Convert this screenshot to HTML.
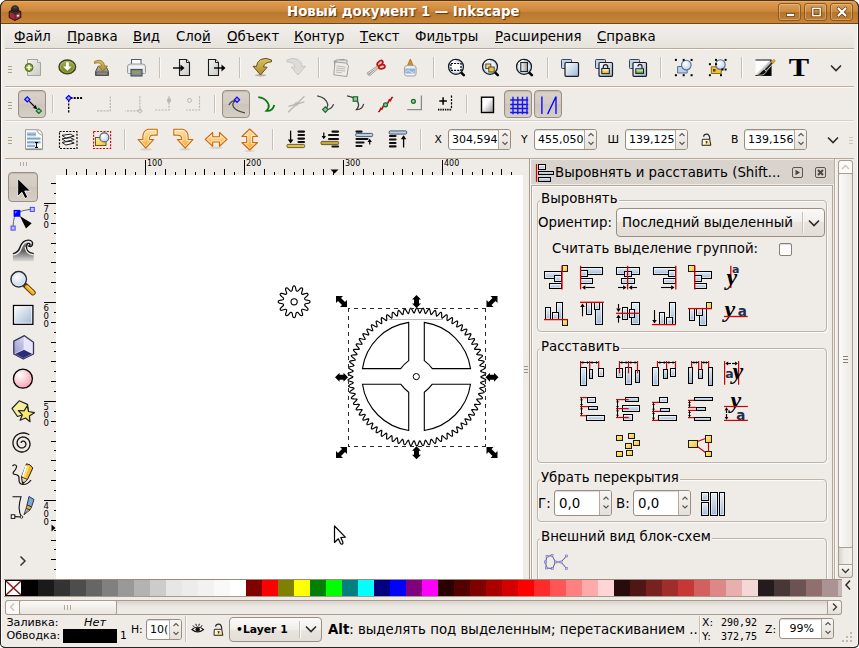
<!DOCTYPE html><html lang="ru"><head><meta charset="utf-8"><title>Новый документ 1 — Inkscape</title><style>
html,body{margin:0;padding:0;background:#fff;}
body{width:859px;height:648px;overflow:hidden;position:relative;font-family:"DejaVu Sans","Liberation Sans",sans-serif;font-size:13.33px;color:#000;}
#win{position:absolute;left:0;top:0;width:859px;height:648px;overflow:hidden;}
#win div,#win svg{position:absolute;box-sizing:border-box;}
svg.ic{overflow:visible;}
.t{white-space:pre;line-height:16px;height:16px;}
.s{white-space:pre;line-height:13px;height:13px;font-size:10.800px;}
.r{white-space:pre;font-size:8px;line-height:9px;height:9px;color:#000;}
u{text-decoration:underline;text-underline-offset:1px;}
.sep{background:#c9bfb3;width:1px;box-shadow:1px 0 0 #fbf9f7;}
.hline{height:1px;background:#c4b5a6;}
.btnp{border:1px solid #9a8e80;border-radius:4px;background:linear-gradient(#d9d2ca,#d3cbc2 50%,#cdc5bb 50%,#d6cfc7);box-shadow:inset 0 1px 1px rgba(0,0,0,.12);}
.spin{border:1px solid #9a8e80;border-radius:3px;background:#fff;box-shadow:inset 0 1px 1px rgba(0,0,0,.15);}
.spinb{border-left:1px solid #b5aa9c;background:linear-gradient(#f8f6f4,#e4dfd9);border-radius:0 2px 2px 0;}
.frame{border:1px solid #c0b4a6;border-radius:4px;box-shadow:inset 1px 1px 0 #fbfaf8, 1px 1px 0 #fbfaf8;}
.flabel{background:#efebe7;padding:0 1px;white-space:pre;line-height:16px;height:16px;}
</style></head><body><div id="win">
<svg class="ic" width="0" height="0" style="left:0;top:0"><defs>
<linearGradient id="gpaper" x1="0" y1="0" x2="1" y2="1"><stop offset="0" stop-color="#f4f4f2"/><stop offset="1" stop-color="#c9c9c5"/></linearGradient>
<linearGradient id="gblue" x1="0" y1="0" x2="1" y2="1"><stop offset="0" stop-color="#dbe6f2"/><stop offset="1" stop-color="#a9c0da"/></linearGradient>
<linearGradient id="gblue2" x1="0" y1="0" x2="0" y2="1"><stop offset="0" stop-color="#e4edf6"/><stop offset="1" stop-color="#9db8d6"/></linearGradient>
<linearGradient id="ggreen" x1="0" y1="0" x2="0" y2="1"><stop offset="0" stop-color="#a3b052"/><stop offset="1" stop-color="#6f7f22"/></linearGradient>
<linearGradient id="ggold" x1="0" y1="0" x2="0" y2="1"><stop offset="0" stop-color="#d9c26a"/><stop offset="1" stop-color="#a98a2e"/></linearGradient>
<linearGradient id="gorange" x1="0" y1="0" x2="0" y2="1"><stop offset="0" stop-color="#fde3a8"/><stop offset="1" stop-color="#f5a93a"/></linearGradient>
<linearGradient id="ggray" x1="0" y1="0" x2="0" y2="1"><stop offset="0" stop-color="#b9b9b5"/><stop offset="1" stop-color="#6e6e6a"/></linearGradient>
<linearGradient id="gwg" x1="0" y1="0" x2="1" y2="0"><stop offset="0" stop-color="#ffffff"/><stop offset="1" stop-color="#9a9a9a"/></linearGradient>
<linearGradient id="gyel" x1="0" y1="0" x2="1" y2="1"><stop offset="0" stop-color="#fff0a0"/><stop offset="1" stop-color="#f2c230"/></linearGradient>
<radialGradient id="gpink" cx=".35" cy=".3" r=".8"><stop offset="0" stop-color="#ffffff"/><stop offset="1" stop-color="#f79aa8"/></radialGradient>
<radialGradient id="glens" cx=".4" cy=".35" r=".7"><stop offset="0" stop-color="#ffffff"/><stop offset="1" stop-color="#bcd0e6"/></radialGradient>
</defs></svg>
<div style="left:0px;top:0px;width:859px;height:648px;background:#efebe7;border-radius:7px 7px 5px 5px;border:1px solid #2a2522;"></div>
<div style="left:1px;top:0px;width:857px;height:24px;border-radius:6px 6px 0 0;border-top:1px solid #4a3520;border-bottom:1px solid #6a4820;background:linear-gradient(#f0b878 0px,#e09a4c 1px,#cb863b 10.500px,#b87830 11px,#ba7a31 13px,#c98435 21px);"></div>
<div class="t" style="left:287px;top:4px;font-weight:bold;color:#fff;text-shadow:1px 1px 1px rgba(60,30,0,.8);letter-spacing:0px;">Новый документ 1 — Inkscape</div>
<svg class="ic" style="left:7.0px;top:4.5px;" width="16" height="16" viewBox="0 0 16 16"><path d="M2.200 6.500 L8 4.500 L13.800 6.500 V12.500 L8 15.500 L2.200 12.500Z" fill="#a8283a" stroke="#1c1418" stroke-width="1"/><path d="M8 9 V15.500" stroke="#5a1420" stroke-width=".8"/><path d="M2.200 6.500 L8 9 L13.800 6.500 L8 4.500Z" fill="#3a3634" stroke="#1c1418" stroke-width=".6"/><path d="M4.400 5.600 Q4 .8 8 .8 Q12 .8 11.600 5.600 Q8 7.500 4.400 5.600Z" fill="#2c2a28" stroke="#141210" stroke-width=".8"/><ellipse cx="8" cy="2.600" rx="2.300" ry="1" fill="#4a4844"/><ellipse cx="11" cy="10.700" rx="1.800" ry="1.300" transform="rotate(-20 11 10.700)" fill="#e8e0d0" stroke="#333" stroke-width=".5"/></svg>
<div style="left:778px;top:3px;width:23px;height:18px;border:1px solid #8a5a22;border-radius:3px;background:linear-gradient(#dba05a,#c98a40 50%,#b5742c 50%,#c07f33);box-shadow:inset 0 0 0 1px rgba(255,220,170,.35);"></div>
<svg class="ic" style="left:781.5px;top:4.0px;" width="16" height="16" viewBox="0 0 16 16"><rect x="4.500" y="9.500" width="8" height="3" fill="#fff" stroke="#6b3f10" stroke-width=".8"/></svg>
<div style="left:804px;top:3px;width:23px;height:18px;border:1px solid #8a5a22;border-radius:3px;background:linear-gradient(#dba05a,#c98a40 50%,#b5742c 50%,#c07f33);box-shadow:inset 0 0 0 1px rgba(255,220,170,.35);"></div>
<svg class="ic" style="left:807.5px;top:4.0px;" width="16" height="16" viewBox="0 0 16 16"><rect x="4.800" y="4.300" width="7.400" height="7.400" fill="none" stroke="#6b3f10" stroke-width="2.800"/><rect x="4.800" y="4.300" width="7.400" height="7.400" fill="none" stroke="#fff" stroke-width="1.400"/></svg>
<div style="left:830px;top:3px;width:23px;height:18px;border:1px solid #8a5a22;border-radius:3px;background:linear-gradient(#dba05a,#c98a40 50%,#b5742c 50%,#c07f33);box-shadow:inset 0 0 0 1px rgba(255,220,170,.35);"></div>
<svg class="ic" style="left:833.5px;top:4.0px;" width="16" height="16" viewBox="0 0 16 16"><path d="M4.500 4.500 L11.500 11.500 M11.500 4.500 L4.500 11.500" stroke="#6b3f10" stroke-width="3.600" stroke-linecap="round"/><path d="M4.500 4.500 L11.500 11.500 M11.500 4.500 L4.500 11.500" stroke="#fff" stroke-width="2.200" stroke-linecap="round"/></svg>
<div style="left:1px;top:24px;width:1px;height:623px;background:#fdfcfb;"></div>
<div style="left:857px;top:24px;width:1px;height:623px;background:#fdfcfb;"></div>
<div style="left:5px;top:24px;width:849px;height:25px;background:linear-gradient(#f3f0ec,#e6e2dc);border-bottom:1px solid #b9a999;"></div>
<div style="left:5px;top:49px;width:849px;height:1px;background:#fbfaf9;"></div>
<div class="t" style="left:14px;top:29px;"><u>Ф</u>айл</div>
<div class="t" style="left:67px;top:29px;"><u>П</u>равка</div>
<div class="t" style="left:133px;top:29px;"><u>В</u>ид</div>
<div class="t" style="left:176px;top:29px;">Сло<u>й</u></div>
<div class="t" style="left:227px;top:29px;"><u>О</u>бъект</div>
<div class="t" style="left:294px;top:29px;"><u>К</u>онтур</div>
<div class="t" style="left:360px;top:29px;"><u>Т</u>екст</div>
<div class="t" style="left:415px;top:29px;">Фи<u>л</u>ьтры</div>
<div class="t" style="left:495px;top:29px;"><u>Р</u>асширения</div>
<div class="t" style="left:597px;top:29px;"><u>С</u>правка</div>
<div style="left:5px;top:86px;width:849px;height:1px;background:#c4ae9b;"></div>
<div style="left:5px;top:87px;width:849px;height:1px;background:#fbfaf9;"></div>
<div style="left:5px;top:120px;width:849px;height:1px;background:#d9d1c8;"></div>
<div style="left:5px;top:121px;width:849px;height:1px;background:#f9f7f5;"></div>
<div style="left:5px;top:158px;width:849px;height:1px;background:#b9a898;"></div>
<div style="left:8px;top:66px;width:4px;height:1px;background:#b59f86;"></div>
<div style="left:8px;top:69px;width:4px;height:1px;background:#b59f86;"></div>
<div style="left:8px;top:72px;width:4px;height:1px;background:#b59f86;"></div>
<div style="left:8px;top:102px;width:4px;height:1px;background:#b59f86;"></div>
<div style="left:8px;top:105px;width:4px;height:1px;background:#b59f86;"></div>
<div style="left:8px;top:108px;width:4px;height:1px;background:#b59f86;"></div>
<div style="left:8px;top:137px;width:4px;height:1px;background:#b59f86;"></div>
<div style="left:8px;top:140px;width:4px;height:1px;background:#b59f86;"></div>
<div style="left:8px;top:143px;width:4px;height:1px;background:#b59f86;"></div>
<svg class="ic" style="left:21.0px;top:56.0px;" width="24" height="24" viewBox="0 0 24 24"><path d="M6.500 3.500 h10 l3 3 v13 h-13z" fill="url(#gpaper)" stroke="#a4a4a0" stroke-width="1"/><path d="M16.500 3.500 v3 h3" fill="#fff" stroke="#a4a4a0" stroke-width=".9"/><circle cx="8" cy="11.500" r="4" fill="#86a032" stroke="#556a18" stroke-width="1"/><path d="M8 9 v5 M5.500 11.500 h5" stroke="#fff" stroke-width="1.600"/></svg>
<svg class="ic" style="left:55.0px;top:56.0px;" width="24" height="24" viewBox="0 0 24 24"><ellipse cx="12.300" cy="10.900" rx="8.300" ry="6.900" fill="url(#ggreen)" stroke="#3c4418" stroke-width="1.400"/><ellipse cx="12.300" cy="10.900" rx="7" ry="5.600" fill="none" stroke="#b8c468" stroke-width=".8" opacity=".7"/><path d="M11 6.200 h2.800 v4.300 h2.800 l-4.200 4.200 l-4.200 -4.200 h2.800z" fill="#fff"/></svg>
<svg class="ic" style="left:89.0px;top:56.0px;" width="24" height="24" viewBox="0 0 24 24"><path d="M6.5 15.5 l2.5 -5 h8 l2.500 5 v4 h-13z" fill="url(#ggray)" stroke="#4e4e4a" stroke-width="1"/><rect x="7.5" y="16" width="11" height="3" fill="#8a8a86" stroke="#55554f" stroke-width=".6"/><path d="M5.5 5.5 c5 -2.500 9.500 -1 10 4.500 h3 l-4.500 5.500 l-4.500 -5.500 h3 c-.5 -3 -3 -4 -7 -2.500z" fill="url(#ggold)" stroke="#8a6f1e" stroke-width=".8"/></svg>
<svg class="ic" style="left:123.0px;top:56.0px;" width="24" height="24" viewBox="0 0 24 24"><rect x="8.500" y="3.500" width="9.500" height="7" fill="#fafafa" stroke="#4a5a80" stroke-width="1"/><path d="M4.500 11 q0 -3 3 -3 h12 q3 0 3 3 v5.500 q0 1 -1 1 h-16 q-1 0 -1 -1z" fill="#e6e6e4" stroke="#9a9a98" stroke-width="1"/><path d="M5.500 11 h16" stroke="#fff" stroke-width="1"/><rect x="8" y="13.500" width="11" height="6.500" fill="#7a8f7a" stroke="#3f5078" stroke-width="1.100"/><rect x="9.500" y="15" width="8" height="3.200" fill="#a0906c"/></svg>
<svg class="ic" style="left:170.0px;top:56.0px;" width="24" height="24" viewBox="0 0 24 24"><path d="M9.500 3.500 h7 l3 3 v13 h-10z" fill="url(#gpaper)" stroke="#1a1a1a" stroke-width="1.100"/><path d="M16.500 3.500 v3 h3" fill="#fff" stroke="#1a1a1a" stroke-width="1"/><path d="M3 12 h8" stroke="#000" stroke-width="1.400"/><path d="M10.500 8.500 l4 3.500 l-4 3.500z" fill="#000"/></svg>
<svg class="ic" style="left:204.0px;top:56.0px;" width="24" height="24" viewBox="0 0 24 24"><path d="M4.500 3.500 h7 l3 3 v13 h-10z" fill="url(#gpaper)" stroke="#1a1a1a" stroke-width="1.100"/><path d="M11.500 3.500 v3 h3" fill="#fff" stroke="#1a1a1a" stroke-width="1"/><path d="M10 12 h8" stroke="#000" stroke-width="1.400"/><path d="M17.500 8.500 l4 3.500 l-4 3.500z" fill="#000"/></svg>
<svg class="ic" style="left:250.0px;top:56.0px;" width="24" height="24" viewBox="0 0 24 24"><ellipse cx="10.500" cy="19.300" rx="5.500" ry="1.100" fill="#000" opacity=".25"/><path d="M21.500 4 Q16 1 10.500 3.500 Q6.500 6 6.500 10.500 L3 10.200 L10.500 19 L17.200 11.200 L13.500 11 Q14 6.500 21.500 5.800Z" fill="url(#ggold)" stroke="#6a5414" stroke-width="1" stroke-linejoin="round"/></svg>
<svg class="ic" style="left:284.0px;top:56.0px;" width="24" height="24" viewBox="0 0 24 24"><path transform="translate(24.500 0) scale(-1 1)" d="M21.500 4 Q16 1 10.500 3.500 Q6.500 6 6.500 10.500 L3 10.200 L10.500 19 L17.200 11.200 L13.500 11 Q14 6.500 21.500 5.800Z" fill="#dddbd7" stroke="#c9c6c1" stroke-width="1" stroke-linejoin="round"/></svg>
<svg class="ic" style="left:329.0px;top:56.0px;" width="24" height="24" viewBox="0 0 24 24"><g fill="#dedcd8" stroke="#8f8d88" stroke-width=".8"><path d="M5 5 l10 -1.700 l2.500 13 l-10 1.700z"/><path d="M7 4 h11 v14.500 h-11z" fill="#e6e4e0"/><path d="M6 6 l10.500 1 l3 2.500 l-1.700 11 l-13 -1.700z" fill="#efede9"/></g><path d="M7.500 10 l9 1.100 M7.300 12 l9 1.100 M7 14 l9 1.100 M6.800 16 l6 .8" stroke="#a5a39e" stroke-width=".7"/></svg>
<svg class="ic" style="left:363.0px;top:56.0px;" width="24" height="24" viewBox="0 0 24 24"><path d="M13.500 11.500 L4.800 17.500 M14 12.500 L6.500 19" stroke="#9a9a9a" stroke-width="2.200" stroke-linecap="round"/><path d="M13.500 11.500 L4.800 17.500 M14 12.500 L6.500 19" stroke="#e4e4e4" stroke-width="1" stroke-linecap="round"/><ellipse cx="17" cy="7.300" rx="2" ry="3.300" transform="rotate(48 17 7.300)" fill="#f0c8c0" stroke="#b41818" stroke-width="1.700"/><ellipse cx="18.800" cy="10.800" rx="2" ry="3.200" transform="rotate(78 18.800 10.800)" fill="#f0c8c0" stroke="#b41818" stroke-width="1.700"/><circle cx="14" cy="11.600" r="1" fill="#e8c040"/></svg>
<svg class="ic" style="left:397.0px;top:56.0px;" width="24" height="24" viewBox="0 0 24 24"><path d="M13.300 3 l2.800 6.500 h-5.600z" fill="#dc8c2c" stroke="#a86414" stroke-width=".8" stroke-linejoin="round"/><path d="M7.500 12 q0 -2.400 2.400 -2.400 h6.800 q2.400 0 2.400 2.400 v5.600 q0 2.400 -2.400 2.400 h-6.800 q-2.400 0 -2.400 -2.400z" fill="#f0f0ee" stroke="#a3a39f" stroke-width="1"/><rect x="8.300" y="12.500" width="10" height="5" fill="#8fb4dc"/><path d="M9.300 15.500 q2 -2.500 4 0 t4 0" stroke="#dfeaf6" stroke-width="1" fill="none"/></svg>
<svg class="ic" style="left:444.0px;top:56.0px;" width="24" height="24" viewBox="0 0 24 24"><path d="M17 16.400 l2.800 2.700" stroke="#000" stroke-width="2.600" stroke-linecap="round"/><circle cx="12" cy="10.800" r="7.500" fill="#c4d6ec" stroke="#14181e" stroke-width="1.200"/><circle cx="12" cy="10.800" r="5.600" fill="#eef3f9"/><path d="M6.500 8 Q8.500 4.800 12 4.600" stroke="#fff" stroke-width="1.200" fill="none"/><rect x="7" y="7.500" width="10" height="6.800" fill="#fff" stroke="#000" stroke-width="1.200" stroke-dasharray="2 1.100"/></svg>
<svg class="ic" style="left:478.0px;top:56.0px;" width="24" height="24" viewBox="0 0 24 24"><path d="M17 16.400 l2.800 2.700" stroke="#000" stroke-width="2.600" stroke-linecap="round"/><circle cx="12" cy="10.800" r="7.500" fill="#c4d6ec" stroke="#14181e" stroke-width="1.200"/><circle cx="12" cy="10.800" r="5.600" fill="#eef3f9"/><path d="M6.500 8 Q8.500 4.800 12 4.600" stroke="#fff" stroke-width="1.200" fill="none"/><rect x="7.800" y="8" width="5" height="4.600" fill="#f6d97a" stroke="#3a3a30" stroke-width=".9"/><rect x="10.800" y="11" width="5.400" height="5" fill="#f2c230" stroke="#3a3a30" stroke-width=".9"/></svg>
<svg class="ic" style="left:512.0px;top:56.0px;" width="24" height="24" viewBox="0 0 24 24"><path d="M17 16.400 l2.800 2.700" stroke="#000" stroke-width="2.600" stroke-linecap="round"/><circle cx="12" cy="10.800" r="7.500" fill="#c4d6ec" stroke="#14181e" stroke-width="1.200"/><circle cx="12" cy="10.800" r="5.600" fill="#eef3f9"/><path d="M6.500 8 Q8.500 4.800 12 4.600" stroke="#fff" stroke-width="1.200" fill="none"/><rect x="8.800" y="6.500" width="6.700" height="9" fill="url(#gwg)" stroke="#222" stroke-width="1.100"/></svg>
<svg class="ic" style="left:557.0px;top:56.0px;" width="24" height="24" viewBox="0 0 24 24"><rect x="4.500" y="3.500" width="10" height="9" rx=".8" fill="#c4d4e8" stroke="#3a465a" stroke-width="1"/><rect x="9" y="7.800" width="13" height="13.200" rx="1" fill="#000" opacity=".18"/><rect x="8" y="6.500" width="13.500" height="13.800" rx="1" fill="url(#grc)" stroke="#181c26" stroke-width="1.200"/></svg>
<svg class="ic" style="left:591.0px;top:56.0px;" width="24" height="24" viewBox="0 0 24 24"><rect x="4.500" y="3.500" width="10" height="9" rx=".8" fill="#c4d4e8" stroke="#3a465a" stroke-width="1"/><rect x="9" y="7.800" width="13" height="13.200" rx="1" fill="#000" opacity=".18"/><rect x="8" y="6.500" width="13.500" height="13.800" rx="1" fill="url(#grc)" stroke="#181c26" stroke-width="1.200"/><path d="M12.300 12.500 V11 Q12.300 8.600 14.500 8.600 Q16.700 8.600 16.700 11 V12.500" fill="none" stroke="#222" stroke-width="1.200"/><rect x="10.800" y="12.500" width="7.500" height="5.200" fill="url(#glk2)" stroke="#1a1a1a" stroke-width="1"/><defs><linearGradient id="glk2" x1="0" y1="0" x2="0" y2="1"><stop offset="0" stop-color="#fffbe0"/><stop offset=".5" stop-color="#f8d860"/><stop offset="1" stop-color="#e8a818"/></linearGradient></defs></svg>
<svg class="ic" style="left:625.0px;top:56.0px;" width="24" height="24" viewBox="0 0 24 24"><rect x="4.500" y="3.500" width="10" height="9" rx=".8" fill="#c4d4e8" stroke="#3a465a" stroke-width="1"/><rect x="9" y="7.800" width="13" height="13.200" rx="1" fill="#000" opacity=".18"/><rect x="8" y="6.500" width="13.500" height="13.800" rx="1" fill="url(#grc)" stroke="#181c26" stroke-width="1.200"/><path d="M13 10.500 Q13 8.400 15 8.400 Q17 8.400 17 10.500 V12.800" fill="none" stroke="#222" stroke-width="1.200"/><rect x="10.800" y="12.800" width="7.700" height="4.600" fill="url(#glk3)" stroke="#1a1a1a" stroke-width="1"/><defs><linearGradient id="glk3" x1="0" y1="0" x2="0" y2="1"><stop offset="0" stop-color="#f4fff0"/><stop offset=".5" stop-color="#9cd87c"/><stop offset="1" stop-color="#4a9a2c"/></linearGradient></defs></svg>
<svg class="ic" style="left:671.0px;top:56.0px;" width="24" height="24" viewBox="0 0 24 24"><path d="M6.600 10.500 h9.600 v6.500 h-9.600z" fill="#bcd0e8" stroke="#5a7090" stroke-width="1"/><circle cx="15.300" cy="9.100" r="4.800" fill="url(#glens)" stroke="#5a7090" stroke-width="1.100"/><rect x="3.9000000000000004" y="2.9" width="2" height="2" fill="#000"/><rect x="11.7" y="2.9" width="2" height="2" fill="#000"/><rect x="19.6" y="2.9" width="2" height="2" fill="#000"/><rect x="3.9000000000000004" y="18.2" width="2" height="2" fill="#000"/><rect x="11.7" y="18.2" width="2" height="2" fill="#000"/><rect x="19.6" y="18.2" width="2" height="2" fill="#000"/></svg>
<svg class="ic" style="left:705.0px;top:56.0px;" width="24" height="24" viewBox="0 0 24 24"><path d="M6.300 10.800 h10 v6.700 h-10z" fill="#f2c230" stroke="#8a6a14" stroke-width="1"/><rect x="8" y="13" width="2.500" height="2.500" fill="#4a3a0a"/><circle cx="15.400" cy="8.600" r="4.800" fill="url(#glens)" stroke="#5a7090" stroke-width="1.100"/><rect x="3.9000000000000004" y="7.199999999999999" width="2" height="2" fill="#000"/><rect x="3.9000000000000004" y="18.2" width="2" height="2" fill="#000"/><rect x="15" y="18.2" width="2" height="2" fill="#000"/><rect x="10" y="2.9" width="2" height="2" fill="#000"/><rect x="19.6" y="2.9" width="2" height="2" fill="#000"/><rect x="19.6" y="12.5" width="2" height="2" fill="#000"/><rect x="10" y="7.199999999999999" width="2" height="2" fill="#000"/><rect x="16.5" y="12.5" width="2" height="2" fill="#000"/></svg>
<svg class="ic" style="left:752.0px;top:56.0px;" width="24" height="24" viewBox="0 0 24 24"><defs><linearGradient id="gfl" x1="0" y1="0" x2="1" y2="1"><stop offset="0" stop-color="#fff"/><stop offset=".45" stop-color="#fff"/><stop offset=".78" stop-color="#000"/></linearGradient></defs><rect x="3.500" y="4" width="15.500" height="15.500" fill="url(#gfl)"/><path d="M3.500 4 H19 V19.500 H3.500" fill="none" stroke="#111" stroke-width="1.200"/><path d="M22 3.200 L12.300 13.300 L14.200 15.200 L23.300 5z" fill="#2a2a2a" stroke="#fff" stroke-width=".7"/><path d="M22 3.200 L19.300 6 L21 7.700 L23.300 5z" fill="#f0a818" stroke="#a86a08" stroke-width=".4"/><path d="M12.300 13.300 c-3 1 -2.800 3.800 -7.800 5.300 c4.500 1.400 9 .2 9.700 -3.400z" fill="#111" stroke="#fff" stroke-width=".6"/></svg>
<svg class="ic" style="left:786.0px;top:56.0px;" width="24" height="24" viewBox="0 0 24 24"><text x="2.700" y="20.400" textLength="20.400" lengthAdjust="spacingAndGlyphs" font-family="Liberation Serif,DejaVu Serif,serif" font-weight="bold" font-size="26" fill="#000">T</text></svg>
<div class="sep" style="left:159px;top:57px;width:1px;height:21px;"></div>
<div class="sep" style="left:239px;top:57px;width:1px;height:21px;"></div>
<div class="sep" style="left:318px;top:57px;width:1px;height:21px;"></div>
<div class="sep" style="left:433px;top:57px;width:1px;height:21px;"></div>
<div class="sep" style="left:547px;top:57px;width:1px;height:21px;"></div>
<div class="sep" style="left:660px;top:57px;width:1px;height:21px;"></div>
<div class="sep" style="left:741px;top:57px;width:1px;height:21px;"></div>
<svg class="ic" style="left:828.0px;top:60.0px;" width="16" height="16" viewBox="0 0 16 16"><path d="M3 5.500 L8 10.500 L13 5.500" fill="none" stroke="#2e2a26" stroke-width="1.600"/></svg>
<div class="btnp" style="left:18px;top:90px;width:28px;height:28px;"></div>
<div class="btnp" style="left:222px;top:90px;width:28px;height:28px;"></div>
<div class="btnp" style="left:504px;top:90px;width:28px;height:28px;"></div>
<div class="btnp" style="left:534px;top:90px;width:28px;height:28px;"></div>
<svg class="ic" style="left:20.5px;top:92.5px;" width="24" height="24" viewBox="0 0 24 24"><path d="M6.3 3.8000000000000003 L8.9 6.4 L6.3 9.0 L3.6999999999999997 6.4Z" fill="#b0a8e8" stroke="#0000ff" stroke-width="1.2"/><path d="M17.8 15.299999999999999 L20.400000000000002 17.9 L17.8 20.5 L15.200000000000001 17.9Z" fill="#b0a8e8" stroke="#0a7a0a" stroke-width="1.2"/><path d="M8.300 8.400 L14.800 14.900" stroke="#000" stroke-width="1.200"/><path d="M16.200 16.300 l-4.200 -1.400 l2.800 -2.800z" fill="#000"/></svg>
<svg class="ic" style="left:60.0px;top:92.5px;" width="24" height="24" viewBox="0 0 24 24"><path d="M10.500 5.100 H22.500" stroke="#000" stroke-width="2" stroke-dasharray="2 1.200"/><path d="M8.700 7 V19.500" stroke="#000" stroke-width="1.300" stroke-dasharray="2.200 1.200"/><path d="M8.7 2.4999999999999996 L11.299999999999999 5.1 L8.7 7.699999999999999 L6.1 5.1Z" fill="#b0a8e8" stroke="#0000ff" stroke-width="1.2"/></svg>
<svg class="ic" style="left:91.0px;top:92.5px;" width="24" height="24" viewBox="0 0 24 24"><path d="M19.300 3.500 V17.900 H5" fill="none" stroke="#b9b5b0" stroke-width="1.200" stroke-dasharray="2 1.200"/></svg>
<svg class="ic" style="left:122.0px;top:92.5px;" width="24" height="24" viewBox="0 0 24 24"><path d="M17.900 3.200 V17.900 H3.300" fill="none" stroke="#b9b5b0" stroke-width="1.200" stroke-dasharray="2 1.200"/><path d="M17.9 15.499999999999998 L20.299999999999997 17.9 L17.9 20.299999999999997 L15.499999999999998 17.9Z" fill="none" stroke="#b9b5b0" stroke-width="1"/></svg>
<svg class="ic" style="left:153.0px;top:92.5px;" width="24" height="24" viewBox="0 0 24 24"><path d="M16 3.200 V17 H2" fill="none" stroke="#b9b5b0" stroke-width="1.200" stroke-dasharray="2 1.200"/><ellipse cx="16" cy="7.400" rx="2" ry="2.300" fill="#b9b5b0"/></svg>
<svg class="ic" style="left:181.0px;top:92.5px;" width="24" height="24" viewBox="0 0 24 24"><path d="M18.500 3.200 V17 H5" fill="none" stroke="#b9b5b0" stroke-width="1.200" stroke-dasharray="2 1.200"/><circle cx="8.500" cy="7.400" r="2" fill="none" stroke="#b9b5b0" stroke-width="1"/></svg>
<svg class="ic" style="left:224.0px;top:92.5px;" width="24" height="24" viewBox="0 0 24 24"><path d="M4.900 12.100 Q7 7.500 13 6.800 Q7 10 9.500 14 Q12 18 20.900 19.800" fill="none" stroke="#444" stroke-width="1.300"/><path d="M13 4.199999999999999 L15.6 6.8 L13 9.4 L10.4 6.8Z" fill="#b0a8e8" stroke="#0000ff" stroke-width="1.2"/></svg>
<svg class="ic" style="left:253.0px;top:92.5px;" width="24" height="24" viewBox="0 0 24 24"><path d="M5.300 4.200 Q13 5 15.600 11.500 Q16.500 15 13.400 17.900 Q19.500 18.500 21.300 11.900" fill="none" stroke="#0a7a0a" stroke-width="1.800"/></svg>
<svg class="ic" style="left:283.0px;top:92.5px;" width="24" height="24" viewBox="0 0 24 24"><path d="M5.200 19.200 L21.400 3.200 M5.500 13.400 L21.400 8.900" stroke="#b9b5b0" stroke-width="1.200"/><circle cx="13.400" cy="11.100" r="2" fill="#b9b5b0" opacity=".8"/></svg>
<svg class="ic" style="left:313.0px;top:92.5px;" width="24" height="24" viewBox="0 0 24 24"><path d="M4.200 2.900 Q13 4.500 14.800 11.500 Q15 14 12.300 16.600 Q18.500 17 20.600 11.100" fill="none" stroke="#444" stroke-width="1.300"/><path d="M12.3 13.900000000000002 L15.0 16.6 L12.3 19.3 L9.600000000000001 16.6Z" fill="#b0a8e8" stroke="#0a7a0a" stroke-width="1.2"/></svg>
<svg class="ic" style="left:343.0px;top:92.5px;" width="24" height="24" viewBox="0 0 24 24"><path d="M4 2.900 Q8 3.500 12.400 6 Q15.500 8.500 15.600 12.100 Q15.500 14.500 13.400 16.600 Q19 17 20.700 10.900" fill="none" stroke="#444" stroke-width="1.300"/><rect x="10.200" y="3.800" width="4.400" height="4.400" fill="#b0a8e8" stroke="#0a7a0a" stroke-width="1.200"/></svg>
<svg class="ic" style="left:373.0px;top:92.5px;" width="24" height="24" viewBox="0 0 24 24"><path d="M5.200 19.200 L20.100 3.800" stroke="#555" stroke-width="1.100"/><path d="M6.2 19 L8 14.5" stroke="#d40000" stroke-width="1.250"/><path d="M8.6 17 L10.4 12.5" stroke="#d40000" stroke-width="1.250"/><path d="M14.8 10.5 L16.6 6" stroke="#d40000" stroke-width="1.250"/><path d="M17.2 8.5 L19 4" stroke="#d40000" stroke-width="1.250"/><circle cx="12.500" cy="11.800" r="2" fill="#b0a8e8" stroke="#0a7a0a" stroke-width="1.200"/></svg>
<svg class="ic" style="left:403.0px;top:92.5px;" width="24" height="24" viewBox="0 0 24 24"><path d="M18.400 2.500 V16.600 H4.200" fill="none" stroke="#8a8a8a" stroke-width="1.300"/><circle cx="10.400" cy="8.300" r="2" fill="#b0a8e8" stroke="#0a7a0a" stroke-width="1.200"/></svg>
<svg class="ic" style="left:433.0px;top:92.5px;" width="24" height="24" viewBox="0 0 24 24"><path d="M10.100 4.200 V11.800 M6.300 8 H13.900" stroke="#000" stroke-width="1.500"/><path d="M18.500 2.500 V16" stroke="#000" stroke-width="1.200" stroke-dasharray="2.200 1.200"/><path d="M5 16.600 H19" stroke="#000" stroke-width="1.800" stroke-dasharray="1.400 .9"/></svg>
<svg class="ic" style="left:475.0px;top:92.5px;" width="24" height="24" viewBox="0 0 24 24"><defs><linearGradient id="gpg" x1="0" y1="0" x2="1" y2="1"><stop offset="0" stop-color="#fff"/><stop offset=".4" stop-color="#fff"/><stop offset="1" stop-color="#8f8f8f"/></linearGradient></defs><rect x="6.500" y="4.200" width="12" height="15.300" fill="url(#gpg)" stroke="#000" stroke-width="1.400"/></svg>
<svg class="ic" style="left:506.0px;top:92.5px;" width="24" height="24" viewBox="0 0 24 24"><path d="M7 3.800 V21.200 M11.800 3.800 V21.200 M16.500 3.800 V21.200 M21 3.800 V21.200 M4.200 7 H22.200 M4.200 11.500 H22.200 M4.200 15.500 H22.200 M4.200 19.500 H22.200" stroke="#0000ff" stroke-width="1.400" opacity=".9"/></svg>
<svg class="ic" style="left:536.0px;top:92.5px;" width="24" height="24" viewBox="0 0 24 24"><path d="M5.900 3.500 V21.100 M20 3.500 V21.100 M20 3.500 L11.600 21.100" stroke="#0000ff" stroke-width="1.300" fill="none"/></svg>
<div class="sep" style="left:52px;top:95px;width:1px;height:18px;"></div>
<div class="sep" style="left:214px;top:95px;width:1px;height:18px;"></div>
<div class="sep" style="left:466px;top:95px;width:1px;height:18px;"></div>
<svg class="ic" style="left:21.0px;top:128.0px;" width="24" height="24" viewBox="0 0 24 24"><path d="M4.500 1.700 h11 q6 0 6 6 v13.200 h-17z" fill="#fbfbfb" stroke="#9a9a98" stroke-width="1"/><path d="M4.500 21.500 h17" stroke="#6a6a68" stroke-width="1.200" opacity=".6"/><path d="M15.500 1.700 q1 4 6 6" fill="#e2e2e0" stroke="#9a9a98" stroke-width=".8"/><rect x="6" y="4.300" width="9" height="4" fill="#a9c4e4"/><rect x="6" y="9.300" width="13.500" height="2.600" fill="#a9c4e4"/><rect x="6" y="13" width="13.500" height="2.600" fill="#a9c4e4"/><rect x="6" y="16.700" width="8" height="2.600" fill="#a9c4e4"/><path d="M6 6.300 h9 M6 10.600 h13.500 M6 14.300 h13.500 M6 18 h8" stroke="#6f94c4" stroke-width=".8"/><path d="M14 14.500 h3 M14 19.500 h3 M15.500 14.500 v5" stroke="#000" stroke-width="1.100"/></svg>
<svg class="ic" style="left:55.0px;top:128.0px;" width="24" height="24" viewBox="0 0 24 24"><rect x="4.500" y="3.500" width="17.500" height="17" fill="none" stroke="#000" stroke-width="1.150" stroke-dasharray="2 1.300"/><g fill="#fff" stroke="#1a1a1a" stroke-width="1" stroke-linejoin="round"><path d="M7 14.4 L15.300 13.2 L19.200 15.1 L10.900 17Z"/><path d="M7 10.9 L15.300 9.7 L19.200 11.6 L10.900 13.5Z"/><path d="M7 7.4 L15.300 6.2 L19.200 8.1 L10.900 10Z"/></g></svg>
<svg class="ic" style="left:89.0px;top:128.0px;" width="24" height="24" viewBox="0 0 24 24"><rect x="4.600" y="3.500" width="17" height="17" fill="none" stroke="#d40000" stroke-width="1.150" stroke-dasharray="2 1.300"/><rect x="6.500" y="9.500" width="10.500" height="8" fill="url(#gyel)" stroke="#5a4a14" stroke-width=".9"/><circle cx="15.300" cy="9.400" r="4.500" fill="url(#glens)" stroke="#4a6080" stroke-width="1.100"/></svg>
<svg class="ic" style="left:136.0px;top:128.0px;" width="24" height="24" viewBox="0 0 24 24"><ellipse cx="10" cy="21.300" rx="6" ry="1.200" fill="#000" opacity=".1"/><path d="M21.200 1.300 H12.400 Q6.900 2.500 6.900 8.800 V11.500 H2 L9.800 20.200 L17.700 11.500 H13.300 Q13.300 7.100 17 7.100 H21.200Z" fill="url(#gorange)" stroke="#cc6a0c" stroke-width="1.100" stroke-linejoin="round"/><path d="M20 2.500 H12.600 Q8.100 3.500 8.100 9 V12.600 H4.600 L9.800 18.400 L15 12.600 H12.100 Q12.100 5.900 17 5.900 H20Z" fill="none" stroke="#fff" stroke-width="1" opacity=".55"/></svg>
<svg class="ic" style="left:170.0px;top:128.0px;" width="24" height="24" viewBox="0 0 24 24"><g transform="translate(25 0) scale(-1 1)"><ellipse cx="10" cy="21.300" rx="6" ry="1.200" fill="#000" opacity=".1"/><path d="M21.200 1.300 H12.400 Q6.900 2.500 6.900 8.800 V11.500 H2 L9.800 20.200 L17.700 11.500 H13.300 Q13.300 7.100 17 7.100 H21.200Z" fill="url(#gorange)" stroke="#cc6a0c" stroke-width="1.100" stroke-linejoin="round"/><path d="M20 2.500 H12.600 Q8.100 3.500 8.100 9 V12.600 H4.600 L9.800 18.400 L15 12.600 H12.100 Q12.100 5.900 17 5.900 H20Z" fill="none" stroke="#fff" stroke-width="1" opacity=".55"/></g></svg>
<svg class="ic" style="left:204.0px;top:128.0px;" width="24" height="24" viewBox="0 0 24 24"><ellipse cx="12" cy="19.800" rx="7" ry="1.200" fill="#000" opacity=".1"/><path d="M1.200 11.400 L8.700 4.500 V8.800 H15.500 V4.500 L23 11.400 L15.500 18.400 V14 H8.700 V18.400Z" fill="url(#gorange)" stroke="#cc6a0c" stroke-width="1.100" stroke-linejoin="round"/><path d="M3 11.400 L7.600 7.200 V10 H16.600 V7.200 L21.200 11.400 L16.600 15.600 V12.800 H7.600 V15.600Z" fill="none" stroke="#fff" stroke-width="1" opacity=".55"/></svg>
<svg class="ic" style="left:238.0px;top:128.0px;" width="24" height="24" viewBox="0 0 24 24"><ellipse cx="11.700" cy="23" rx="5" ry="1.100" fill="#000" opacity=".1"/><path d="M11.700 1 L19.600 8.500 H14.700 V14.500 H19.600 L11.700 22 L3.900 14.500 H8.700 V8.500 H3.900Z" fill="url(#gorange)" stroke="#cc6a0c" stroke-width="1.100" stroke-linejoin="round"/><path d="M11.700 2.800 L16.800 7.400 H13.500 V15.600 H16.800 L11.700 20.200 L6.700 15.600 H9.900 V7.400 H6.700Z" fill="none" stroke="#fff" stroke-width="1" opacity=".55"/></svg>
<svg class="ic" style="left:284.0px;top:128.0px;" width="24" height="24" viewBox="0 0 24 24"><path d="M6.600 2.700 V13" stroke="#000" stroke-width="1.300"/><path d="M3.800 11.500 h5.600 l-2.800 4z" fill="#000"/><path d="M14.5 3.6 H20" stroke="#111" stroke-width="2.2" stroke-linecap="round"/><path d="M14.5 7 H20" stroke="#111" stroke-width="2.2" stroke-linecap="round"/><path d="M14.5 10.6 H20" stroke="#111" stroke-width="2.2" stroke-linecap="round"/><path d="M14.5 14 H20" stroke="#111" stroke-width="2.2" stroke-linecap="round"/><rect x="3" y="16.4" width="17.6" height="3.200" rx="1" fill="#e8c040" stroke="#5a5030" stroke-width=".9"/></svg>
<svg class="ic" style="left:318.0px;top:128.0px;" width="24" height="24" viewBox="0 0 24 24"><path d="M14.5 3.6 H20" stroke="#111" stroke-width="2.2" stroke-linecap="round"/><path d="M11 7 H20" stroke="#111" stroke-width="2.2" stroke-linecap="round"/><path d="M11 11 H20" stroke="#111" stroke-width="2.2" stroke-linecap="round"/><path d="M14.5 18.5 H20" stroke="#111" stroke-width="2.2" stroke-linecap="round"/><rect x="3" y="13.4" width="17.6" height="3.200" rx="1" fill="#c9a83a" stroke="#5a5030" stroke-width=".9"/><path d="M5.800 4.500 V9" stroke="#000" stroke-width="1.200"/><path d="M3.600 8 h4.400 l-2.200 3.200z" fill="#000"/></svg>
<svg class="ic" style="left:352.0px;top:128.0px;" width="24" height="24" viewBox="0 0 24 24"><path d="M4.5 3.6 H9.5" stroke="#111" stroke-width="2.2" stroke-linecap="round"/><rect x="3.7" y="5.4" width="16.900000000000002" height="3.200" rx="1" fill="#b9cfe6" stroke="#3a4a60" stroke-width=".9"/><path d="M4.5 11 H15.5" stroke="#111" stroke-width="2.2" stroke-linecap="round"/><path d="M4.5 14.5 H11.5" stroke="#111" stroke-width="2.2" stroke-linecap="round"/><path d="M4.5 18 H9.5" stroke="#111" stroke-width="2.2" stroke-linecap="round"/><path d="M17.700 13 V16.500" stroke="#000" stroke-width="1.200"/><path d="M15.500 14 h4.400 l-2.200 -3.200z" fill="#000"/></svg>
<svg class="ic" style="left:386.0px;top:128.0px;" width="24" height="24" viewBox="0 0 24 24"><rect x="3.2" y="2.9" width="17.5" height="3.200" rx="1" fill="#b9cfe6" stroke="#3a4a60" stroke-width=".9"/><path d="M4 8 H9.5" stroke="#111" stroke-width="2.2" stroke-linecap="round"/><path d="M4 11.5 H9.5" stroke="#111" stroke-width="2.2" stroke-linecap="round"/><path d="M4 15 H9.5" stroke="#111" stroke-width="2.2" stroke-linecap="round"/><path d="M4 18.4 H9.5" stroke="#111" stroke-width="2.2" stroke-linecap="round"/><path d="M17.600 10 V19.500" stroke="#000" stroke-width="1.300"/><path d="M14.800 11.200 h5.600 l-2.800 -4z" fill="#000"/></svg>
<div class="sep" style="left:124px;top:129px;width:1px;height:21px;"></div>
<div class="sep" style="left:272px;top:129px;width:1px;height:21px;"></div>
<div class="sep" style="left:420px;top:129px;width:1px;height:21px;"></div>
<div class="s" style="left:434.5px;top:133px;">X</div>
<div class="spin" style="left:448px;top:129px;width:63px;height:21px;"></div>
<div class="spinb" style="left:498px;top:130px;width:12px;height:19px;"></div>
<svg class="ic" style="left:498.5px;top:130px" width="12" height="19" viewBox="0 0 12 19"><path d="M3.500 6.0 l2.500 -2.500 l2.500 2.500 M3.500 12.0 l2.500 2.500 l2.500 -2.500" fill="none" stroke="#5a544e" stroke-width="1.1"/></svg>
<div class="s" style="left:452px;top:133.0px;font-size:11px;">304,594</div>
<div class="s" style="left:521px;top:133px;">Y</div>
<div class="spin" style="left:534px;top:129px;width:63px;height:21px;"></div>
<div class="spinb" style="left:584px;top:130px;width:12px;height:19px;"></div>
<svg class="ic" style="left:584.5px;top:130px" width="12" height="19" viewBox="0 0 12 19"><path d="M3.500 6.0 l2.500 -2.500 l2.500 2.500 M3.500 12.0 l2.500 2.500 l2.500 -2.500" fill="none" stroke="#5a544e" stroke-width="1.1"/></svg>
<div class="s" style="left:538px;top:133.0px;font-size:11px;">455,050</div>
<div class="s" style="left:607.5px;top:133px;">Ш</div>
<div class="spin" style="left:625px;top:129px;width:63px;height:21px;"></div>
<div class="spinb" style="left:675px;top:130px;width:12px;height:19px;"></div>
<svg class="ic" style="left:675.5px;top:130px" width="12" height="19" viewBox="0 0 12 19"><path d="M3.500 6.0 l2.500 -2.500 l2.500 2.500 M3.500 12.0 l2.500 2.500 l2.500 -2.500" fill="none" stroke="#5a544e" stroke-width="1.1"/></svg>
<div class="s" style="left:629px;top:133.0px;font-size:11px;">139,125</div>
<div class="s" style="left:731px;top:133px;">В</div>
<div class="spin" style="left:744px;top:129px;width:63px;height:21px;"></div>
<div class="spinb" style="left:794px;top:130px;width:12px;height:19px;"></div>
<svg class="ic" style="left:794.5px;top:130px" width="12" height="19" viewBox="0 0 12 19"><path d="M3.500 6.0 l2.500 -2.500 l2.500 2.500 M3.500 12.0 l2.500 2.500 l2.500 -2.500" fill="none" stroke="#5a544e" stroke-width="1.1"/></svg>
<div class="s" style="left:748px;top:133.0px;font-size:11px;">139,156</div>
<svg class="ic" style="left:698.0px;top:133.0px;" width="16" height="16" viewBox="0 0 16 16"><defs><linearGradient id="glk" x1="0" y1="0" x2="1" y2="1"><stop offset="0" stop-color="#ffffff"/><stop offset=".45" stop-color="#fdf6c8"/><stop offset="1" stop-color="#f0cc30"/></linearGradient></defs><path d="M5.600 3.800 Q5.800 1.200 8.600 1.200 Q11.700 1.200 11.800 6.500" fill="none" stroke="#2a2a2a" stroke-width="1.200"/><path d="M4.300 6.300 H11.700 L12.900 12.300 H4 Z" fill="url(#glk)" stroke="#2a2a2a" stroke-width="1"/><path d="M7.300 8.200 h2.400 l-.9 2.800z" fill="#222"/></svg>
<svg class="ic" style="left:825.0px;top:132.0px;" width="16" height="16" viewBox="0 0 16 16"><path d="M3 5.500 L8 10.500 L13 5.500" fill="none" stroke="#2e2a26" stroke-width="1.600"/></svg>
<div style="left:849px;top:137px;width:4px;height:1px;background:#cfc4b8;"></div>
<div style="left:849px;top:140px;width:4px;height:1px;background:#cfc4b8;"></div>
<div style="left:849px;top:143px;width:4px;height:1px;background:#cfc4b8;"></div>
<div style="left:20px;top:162px;width:1px;height:4px;background:#b9ab9c;"></div>
<div style="left:23px;top:162px;width:1px;height:4px;background:#b9ab9c;"></div>
<div style="left:26px;top:162px;width:1px;height:4px;background:#b9ab9c;"></div>
<div class="btnp" style="left:8px;top:172px;width:30px;height:30px;"></div>
<svg class="ic" style="left:9.0px;top:173.0px;" width="28" height="28" viewBox="0 0 28 28"><path d="M8.700 5.500 v17.800 l4.200 -4 l3.100 6.200 l2.800 -1.300 l-3.100 -6.200 h5.800z" fill="#000" stroke="#fff" stroke-width=".8"/></svg>
<svg class="ic" style="left:9.0px;top:205.0px;" width="28" height="28" viewBox="0 0 28 28"><path d="M4.100 21 Q4.500 11 8 8.300 Q13 5 21.300 4.400" fill="none" stroke="#666" stroke-width="1"/><rect x="5.2" y="5.500000000000001" width="5.6" height="5.6" fill="#0000ff" stroke="#0000ff" stroke-width="1.2"/><path d="M6 6.300 l2.500 0 l-2.500 2.500z" fill="#8080ff"/><rect x="21.3" y="2.4000000000000004" width="4" height="4" fill="#c8c8ff" stroke="#4040ff" stroke-width="1"/><rect x="2.0999999999999996" y="21.1" width="4" height="4" fill="#c8c8ff" stroke="#4040ff" stroke-width="1"/><path d="M10.800 11 L22.700 18.300 L17 23.500Z" fill="#000"/></svg>
<svg class="ic" style="left:9.0px;top:237.0px;" width="28" height="28" viewBox="0 0 28 28"><defs><linearGradient id="gtw" x1="0" y1="0" x2="0" y2="1"><stop offset="0" stop-color="#8a8a8a"/><stop offset=".5" stop-color="#606060"/><stop offset="1" stop-color="#dcdcda"/></linearGradient></defs><path d="M3.900 24.200 V16.500 Q9 16 11 10 Q13.500 3 19.500 3 Q24.500 3.500 23.500 8 Q22 10.500 19.500 9 Q21.500 8 20.500 6.500 Q18 5.500 17.500 9.500 Q17.500 14 21 15.500 L24.700 16.500 V24.200Z" fill="url(#gtw)"/><path d="M3.900 16.500 Q9 16 11 10 Q13.500 3 19.500 3 Q24.500 3.500 23.500 8 Q22 10.500 19.500 9 Q21.500 8 20.500 6.500 Q18 5.500 17.500 9.500 Q17.500 14 21 15.500 L24.700 16.500" fill="none" stroke="#111" stroke-width="1.200"/><path d="M4.300 18 Q10.500 17.200 12.400 10.800 Q14.500 4.800 19.500 4.600 Q22 4.800 22.200 6.800" fill="none" stroke="#fff" stroke-width="1.200" opacity=".95"/><path d="M16.200 10 Q16.500 15 21 17 L24.500 18" fill="none" stroke="#fff" stroke-width="1.100" opacity=".9"/></svg>
<svg class="ic" style="left:9.0px;top:269.0px;" width="28" height="28" viewBox="0 0 28 28"><path d="M16.400 16.500 L24 23.700" stroke="#5a4008" stroke-width="5.400" stroke-linecap="round"/><path d="M17.800 17.800 L24 23.700" stroke="#f5b020" stroke-width="3.600" stroke-linecap="round"/><path d="M18.500 17.300 L24.300 22.800" stroke="#fde090" stroke-width="1" stroke-linecap="round"/><circle cx="9.700" cy="10.300" r="7.700" fill="url(#glens)" stroke="#2a2e36" stroke-width="1.500"/><circle cx="9.700" cy="10.300" r="6.300" fill="none" stroke="#dce6f2" stroke-width="1.100"/></svg>
<svg class="ic" style="left:9.0px;top:301.0px;" width="28" height="28" viewBox="0 0 28 28"><defs><linearGradient id="grc" x1="0" y1="0" x2="1" y2="1"><stop offset="0" stop-color="#ffffff"/><stop offset="1" stop-color="#9fb8d4"/></linearGradient></defs><rect x="4.500" y="4.500" width="19.400" height="18.800" fill="url(#grc)" stroke="#000" stroke-width="1.300"/><rect x="5.700" y="5.700" width="17" height="16.400" fill="none" stroke="#fff" stroke-width=".8" opacity=".8"/></svg>
<svg class="ic" style="left:9.0px;top:333.0px;" width="28" height="28" viewBox="0 0 28 28"><defs><linearGradient id="g3a" x1="0" y1="1" x2="1" y2="0"><stop offset="0" stop-color="#8c8ccc"/><stop offset="1" stop-color="#f0f0fc"/></linearGradient></defs><path d="M15.400 2.700 L24.500 9.200 V21 L14.300 26 L4.800 21 V8.200Z" fill="url(#g3a)"/><path d="M15.400 2.700 L24.500 9.200 V21 L15 16.300Z" fill="#e6e6fa"/><path d="M6.300 20.800 L15 16.800 L23 20.800 L14.300 25Z" fill="#2c2c78"/><path d="M15.400 2.700 L15 16.300 L4.800 21 M15 16.300 L24.500 21" fill="none" stroke="#f4f4ff" stroke-width=".8" opacity=".7"/><path d="M15.400 2.700 L24.500 9.200 V21 L14.300 26 L4.800 21 V8.200Z" fill="none" stroke="#34345c" stroke-width="1.300" stroke-linejoin="round"/></svg>
<svg class="ic" style="left:9.0px;top:365.0px;" width="28" height="28" viewBox="0 0 28 28"><circle cx="13.900" cy="13.700" r="9.500" fill="url(#gpink)" stroke="#000" stroke-width="1.300"/></svg>
<svg class="ic" style="left:9.0px;top:397.0px;" width="28" height="28" viewBox="0 0 28 28"><path d="M3 11.500 L10.200 3.800 L18.500 7.400 L19.500 16 L8.500 19.500Z" fill="#f6ee9a" stroke="#222" stroke-width="1.200" stroke-linejoin="round"/><path d="M18.2 8.8 L19.6 14.5 L25.4 15.7 L20.4 18.9 L21.0 24.7 L16.5 21.0 L11.1 23.3 L13.3 17.9 L9.4 13.5 L15.2 13.8Z" fill="#f8ea70" stroke="#222" stroke-width="1.200" stroke-linejoin="round"/></svg>
<svg class="ic" style="left:9.0px;top:429.0px;" width="28" height="28" viewBox="0 0 28 28"><path d="M12.1 14.0 L12.1 13.7 L12.2 13.4 L12.3 13.2 L12.4 12.9 L12.6 12.7 L12.9 12.5 L13.2 12.3 L13.6 12.2 L14.0 12.1 L14.4 12.1 L14.8 12.2 L15.2 12.3 L15.6 12.6 L15.9 12.9 L16.3 13.2 L16.5 13.6 L16.7 14.1 L16.9 14.6 L16.9 15.2 L16.9 15.7 L16.7 16.3 L16.5 16.8 L16.1 17.3 L15.7 17.8 L15.2 18.2 L14.7 18.5 L14.0 18.8 L13.3 18.9 L12.6 18.9 L11.9 18.8 L11.2 18.6 L10.5 18.3 L9.9 17.8 L9.3 17.3 L8.9 16.7 L8.5 15.9 L8.2 15.1 L8.1 14.3 L8.1 13.4 L8.2 12.6 L8.5 11.7 L8.9 10.9 L9.4 10.2 L10.1 9.5 L10.9 8.9 L11.8 8.5 L12.7 8.2 L13.7 8.0 L14.8 8.1 L15.8 8.2 L16.8 8.6 L17.7 9.1 L18.6 9.7 L19.4 10.5 L20.0 11.5 L20.5 12.5 L20.8 13.6 L21.0 14.8 L21.0 15.9 L20.7 17.1 L20.3 18.3 L19.7 19.4 L19.0 20.4 L18.0 21.2 L17.0 21.9 L15.8 22.5 L14.5 22.9 L13.2 23.0 L11.9 23.0 L10.5 22.7 L9.2 22.2 L8.0 21.5 L6.9 20.7 L5.9 19.6 L5.1 18.4 L4.5 17.1 L4.1 15.7 L4.0 14.2 L4.0 12.7 L4.3 11.2 L4.9 9.7 L5.6 8.4 L6.6 7.1 L7.8 6.1 L9.2 5.2 L10.6 4.5 L12.2 4.1 L13.9 3.9 L15.5 4.0 L17.2 4.4 L18.8 5.0 L20.3 5.8" fill="none" stroke="#111" stroke-width="1.300"/></svg>
<svg class="ic" style="left:9.0px;top:461.0px;" width="28" height="28" viewBox="0 0 28 28"><path d="M3.500 5 Q6 2.500 7.500 5 Q8 7 4.500 11 Q3 13 6.500 13.500 Q10.500 14 10 18 Q9.500 23 14 23.500 Q19 23.500 22 19" fill="none" stroke="#111" stroke-width="1.200"/><path d="M17.500 2.800 Q21.500 3 23.800 7 L18.500 18.500 L13.700 22.800 L12.500 16Z" fill="#f8b828" stroke="#222" stroke-width="1" stroke-linejoin="round"/><path d="M17.300 4.500 L13.800 15.500" stroke="#fff" stroke-width="2" opacity=".95"/><path d="M19.500 5 L15.500 16.500" stroke="#fde27a" stroke-width="1.600"/><path d="M12.500 16 L18.500 18.500 L13.700 22.800Z" fill="#ecd8a8" stroke="#222" stroke-width=".8" stroke-linejoin="round"/><path d="M13.700 22.800 l-.4 -2.400 l2 .8z" fill="#000"/></svg>
<svg class="ic" style="left:9.0px;top:493.0px;" width="28" height="28" viewBox="0 0 28 28"><path d="M3.500 3.800 H12 Q8 16 12.500 24 L6 23.600" fill="none" stroke="#111" stroke-width="1.100"/><rect x="2.2" y="21.8" width="3.6" height="3.6" fill="#fff" stroke="#111" stroke-width="1"/><circle cx="12.500" cy="24" r="1.300" fill="#fff" stroke="#111" stroke-width=".8"/><path d="M20 3.500 L25 6.500 L22.500 14 L18 12Z" fill="#7aa8d8" stroke="#223a5a" stroke-width="1"/><path d="M18 12 L22.500 14 L21 17 L17 15.500Z" fill="#f0b030" stroke="#222" stroke-width=".8"/><path d="M17 15.500 L21 17 L15 21.700Z" fill="#d8d8d8" stroke="#222" stroke-width=".8"/><path d="M15 21.700 L18.500 17" stroke="#222" stroke-width=".6"/></svg>
<svg class="ic" style="left:15.0px;top:553.0px;" width="16" height="16" viewBox="0 0 16 16"><path d="M5.5 3.5 L10 8 L5.5 12.5" fill="none" stroke="#3a3632" stroke-width="1.5"/></svg>
<div style="left:56px;top:175px;width:467px;height:404px;background:#fff;"></div>
<svg class="ic" style="left:0;top:0" width="859" height="648"><rect x="66" y="169" width="1" height="6" fill="#000"/><rect x="76" y="172" width="1" height="3" fill="#000"/><rect x="86" y="169" width="1" height="6" fill="#000"/><rect x="96" y="172" width="1" height="3" fill="#000"/><rect x="105" y="169" width="1" height="6" fill="#000"/><rect x="115" y="172" width="1" height="3" fill="#000"/><rect x="125" y="169" width="1" height="6" fill="#000"/><rect x="135" y="172" width="1" height="3" fill="#000"/><rect x="145" y="160" width="1" height="15" fill="#000"/><rect x="155" y="172" width="1" height="3" fill="#000"/><rect x="165" y="169" width="1" height="6" fill="#000"/><rect x="175" y="172" width="1" height="3" fill="#000"/><rect x="185" y="169" width="1" height="6" fill="#000"/><rect x="195" y="172" width="1" height="3" fill="#000"/><rect x="204" y="169" width="1" height="6" fill="#000"/><rect x="214" y="172" width="1" height="3" fill="#000"/><rect x="224" y="169" width="1" height="6" fill="#000"/><rect x="234" y="172" width="1" height="3" fill="#000"/><rect x="244" y="160" width="1" height="15" fill="#000"/><rect x="254" y="172" width="1" height="3" fill="#000"/><rect x="264" y="169" width="1" height="6" fill="#000"/><rect x="274" y="172" width="1" height="3" fill="#000"/><rect x="284" y="169" width="1" height="6" fill="#000"/><rect x="294" y="172" width="1" height="3" fill="#000"/><rect x="303" y="169" width="1" height="6" fill="#000"/><rect x="313" y="172" width="1" height="3" fill="#000"/><rect x="323" y="169" width="1" height="6" fill="#000"/><rect x="333" y="172" width="1" height="3" fill="#000"/><rect x="343" y="160" width="1" height="15" fill="#000"/><rect x="353" y="172" width="1" height="3" fill="#000"/><rect x="363" y="169" width="1" height="6" fill="#000"/><rect x="373" y="172" width="1" height="3" fill="#000"/><rect x="383" y="169" width="1" height="6" fill="#000"/><rect x="393" y="172" width="1" height="3" fill="#000"/><rect x="402" y="169" width="1" height="6" fill="#000"/><rect x="412" y="172" width="1" height="3" fill="#000"/><rect x="422" y="169" width="1" height="6" fill="#000"/><rect x="432" y="172" width="1" height="3" fill="#000"/><rect x="442" y="160" width="1" height="15" fill="#000"/><rect x="452" y="172" width="1" height="3" fill="#000"/><rect x="462" y="169" width="1" height="6" fill="#000"/><rect x="472" y="172" width="1" height="3" fill="#000"/><rect x="482" y="169" width="1" height="6" fill="#000"/><rect x="492" y="172" width="1" height="3" fill="#000"/><rect x="501" y="169" width="1" height="6" fill="#000"/><rect x="511" y="172" width="1" height="3" fill="#000"/><rect x="54" y="569" width="2" height="1" fill="#000"/><rect x="51" y="559" width="5" height="1" fill="#000"/><rect x="54" y="549" width="2" height="1" fill="#000"/><rect x="51" y="540" width="5" height="1" fill="#000"/><rect x="54" y="530" width="2" height="1" fill="#000"/><rect x="51" y="520" width="5" height="1" fill="#000"/><rect x="54" y="510" width="2" height="1" fill="#000"/><rect x="44" y="500" width="12" height="1" fill="#000"/><rect x="54" y="490" width="2" height="1" fill="#000"/><rect x="51" y="480" width="5" height="1" fill="#000"/><rect x="54" y="470" width="2" height="1" fill="#000"/><rect x="51" y="460" width="5" height="1" fill="#000"/><rect x="54" y="450" width="2" height="1" fill="#000"/><rect x="51" y="441" width="5" height="1" fill="#000"/><rect x="54" y="431" width="2" height="1" fill="#000"/><rect x="51" y="421" width="5" height="1" fill="#000"/><rect x="54" y="411" width="2" height="1" fill="#000"/><rect x="44" y="401" width="12" height="1" fill="#000"/><rect x="54" y="391" width="2" height="1" fill="#000"/><rect x="51" y="381" width="5" height="1" fill="#000"/><rect x="54" y="371" width="2" height="1" fill="#000"/><rect x="51" y="361" width="5" height="1" fill="#000"/><rect x="54" y="351" width="2" height="1" fill="#000"/><rect x="51" y="342" width="5" height="1" fill="#000"/><rect x="54" y="332" width="2" height="1" fill="#000"/><rect x="51" y="322" width="5" height="1" fill="#000"/><rect x="54" y="312" width="2" height="1" fill="#000"/><rect x="44" y="302" width="12" height="1" fill="#000"/><rect x="54" y="292" width="2" height="1" fill="#000"/><rect x="51" y="282" width="5" height="1" fill="#000"/><rect x="54" y="272" width="2" height="1" fill="#000"/><rect x="51" y="262" width="5" height="1" fill="#000"/><rect x="54" y="252" width="2" height="1" fill="#000"/><rect x="51" y="243" width="5" height="1" fill="#000"/><rect x="54" y="233" width="2" height="1" fill="#000"/><rect x="51" y="223" width="5" height="1" fill="#000"/><rect x="54" y="213" width="2" height="1" fill="#000"/><rect x="44" y="203" width="12" height="1" fill="#000"/><rect x="54" y="193" width="2" height="1" fill="#000"/><rect x="51" y="183" width="5" height="1" fill="#000"/><path d="M51.500 524.500 l4 3.500 l-4 3.500z" fill="#000"/><path d="M330.500 169.500 h8 l-4 4z" fill="#000"/></svg>
<div class="r" style="left:147px;top:159px;">100</div>
<div class="r" style="left:246px;top:159px;">200</div>
<div class="r" style="left:345px;top:159px;">300</div>
<div class="r" style="left:444px;top:159px;">400</div>
<div class="r" style="left:43.500px;top:204.70px;font-size:8.500px;">7</div>
<div class="r" style="left:43.500px;top:212.85px;font-size:8.500px;">0</div>
<div class="r" style="left:43.500px;top:221.00px;font-size:8.500px;">0</div>
<div class="r" style="left:43.500px;top:303.70px;font-size:8.500px;">6</div>
<div class="r" style="left:43.500px;top:311.85px;font-size:8.500px;">0</div>
<div class="r" style="left:43.500px;top:320.00px;font-size:8.500px;">0</div>
<div class="r" style="left:43.500px;top:402.70px;font-size:8.500px;">5</div>
<div class="r" style="left:43.500px;top:410.85px;font-size:8.500px;">0</div>
<div class="r" style="left:43.500px;top:419.00px;font-size:8.500px;">0</div>
<div class="r" style="left:43.500px;top:501.70px;font-size:8.500px;">4</div>
<div class="r" style="left:43.500px;top:509.85px;font-size:8.500px;">0</div>
<div class="r" style="left:43.500px;top:518.00px;font-size:8.500px;">0</div>
<svg class="ic" style="left:56px;top:175px" width="468" height="401" viewBox="56 175 468 401"><path d="M310.00 301.80 L309.85 302.49 L308.89 303.09 L306.98 303.50 L305.45 303.80 L304.89 304.19 L304.73 304.65 L304.64 305.12 L304.93 305.74 L306.10 306.77 L307.55 308.07 L308.08 309.08 L307.87 309.75 L307.39 310.27 L306.26 310.32 L304.41 309.71 L302.93 309.21 L302.25 309.27 L301.88 309.58 L301.57 309.95 L301.51 310.63 L302.01 312.11 L302.62 313.96 L302.57 315.09 L302.05 315.57 L301.38 315.78 L300.37 315.25 L299.07 313.80 L298.04 312.63 L297.42 312.34 L296.95 312.43 L296.49 312.59 L296.10 313.15 L295.80 314.68 L295.39 316.59 L294.79 317.55 L294.10 317.70 L293.41 317.55 L292.81 316.59 L292.40 314.68 L292.10 313.15 L291.71 312.59 L291.25 312.43 L290.78 312.34 L290.16 312.63 L289.13 313.80 L287.83 315.25 L286.82 315.78 L286.15 315.57 L285.63 315.09 L285.58 313.96 L286.19 312.11 L286.69 310.63 L286.63 309.95 L286.32 309.58 L285.95 309.27 L285.27 309.21 L283.79 309.71 L281.94 310.32 L280.81 310.27 L280.33 309.75 L280.12 309.08 L280.65 308.07 L282.10 306.77 L283.27 305.74 L283.56 305.12 L283.47 304.65 L283.31 304.19 L282.75 303.80 L281.22 303.50 L279.31 303.09 L278.35 302.49 L278.20 301.80 L278.35 301.11 L279.31 300.51 L281.22 300.10 L282.75 299.80 L283.31 299.41 L283.47 298.95 L283.56 298.48 L283.27 297.86 L282.10 296.83 L280.65 295.53 L280.12 294.52 L280.33 293.85 L280.81 293.33 L281.94 293.28 L283.79 293.89 L285.27 294.39 L285.95 294.33 L286.32 294.02 L286.63 293.65 L286.69 292.97 L286.19 291.49 L285.58 289.64 L285.63 288.51 L286.15 288.03 L286.82 287.82 L287.83 288.35 L289.13 289.80 L290.16 290.97 L290.78 291.26 L291.25 291.17 L291.71 291.01 L292.10 290.45 L292.40 288.92 L292.81 287.01 L293.41 286.05 L294.10 285.90 L294.79 286.05 L295.39 287.01 L295.80 288.92 L296.10 290.45 L296.49 291.01 L296.95 291.17 L297.42 291.26 L298.04 290.97 L299.07 289.80 L300.37 288.35 L301.38 287.82 L302.05 288.03 L302.57 288.51 L302.62 289.64 L302.01 291.49 L301.51 292.97 L301.57 293.65 L301.88 294.02 L302.25 294.33 L302.93 294.39 L304.41 293.89 L306.26 293.28 L307.39 293.33 L307.87 293.85 L308.08 294.52 L307.55 295.53 L306.10 296.83 L304.93 297.86 L304.64 298.48 L304.73 298.95 L304.89 299.41 L305.45 299.80 L306.98 300.10 L308.89 300.51 L309.85 301.11Z" fill="none" stroke="#000" stroke-width="1.150" stroke-linejoin="round"/><circle cx="294.1" cy="301.8" r="3.1" fill="none" stroke="#000" stroke-width="1.100"/><path d="M480.80 376.90 L481.25 377.38 L482.26 377.88 L483.52 378.40 L484.71 378.93 L485.54 379.47 L485.83 380.00 L485.50 380.50 L484.62 380.96 L483.38 381.38 L482.08 381.78 L481.03 382.19 L480.54 382.63 L480.94 383.15 L481.91 383.73 L483.11 384.36 L484.25 385.00 L485.04 385.61 L485.28 386.16 L484.90 386.63 L483.98 387.01 L482.71 387.32 L481.38 387.61 L480.30 387.92 L479.77 388.31 L480.13 388.86 L481.03 389.53 L482.18 390.27 L483.25 391.00 L483.98 391.68 L484.17 392.25 L483.75 392.69 L482.80 392.98 L481.51 393.18 L480.16 393.34 L479.06 393.55 L478.50 393.90 L478.80 394.48 L479.64 395.23 L480.72 396.06 L481.72 396.90 L482.39 397.64 L482.52 398.22 L482.07 398.61 L481.10 398.83 L479.79 398.91 L478.43 398.95 L477.31 399.06 L476.73 399.35 L476.97 399.96 L477.75 400.78 L478.74 401.71 L479.67 402.63 L480.26 403.42 L480.35 404.02 L479.86 404.37 L478.87 404.49 L477.57 404.46 L476.21 404.38 L475.08 404.38 L474.47 404.63 L474.66 405.25 L475.36 406.14 L476.27 407.15 L477.11 408.15 L477.63 409.00 L477.66 409.60 L477.14 409.90 L476.15 409.94 L474.85 409.78 L473.51 409.58 L472.38 409.49 L471.75 409.67 L471.89 410.32 L472.50 411.26 L473.32 412.35 L474.07 413.42 L474.51 414.31 L474.49 414.91 L473.94 415.17 L472.95 415.11 L471.67 414.85 L470.35 414.52 L469.24 414.33 L468.60 414.46 L468.67 415.11 L469.20 416.11 L469.91 417.27 L470.56 418.40 L470.92 419.33 L470.85 419.92 L470.28 420.13 L469.30 419.98 L468.05 419.60 L466.76 419.16 L465.67 418.87 L465.02 418.94 L465.04 419.60 L465.48 420.64 L466.08 421.86 L466.63 423.04 L466.90 424.00 L466.77 424.58 L466.19 424.74 L465.23 424.51 L464.02 424.02 L462.77 423.46 L461.71 423.08 L461.06 423.09 L461.02 423.74 L461.36 424.82 L461.86 426.08 L462.29 427.31 L462.48 428.29 L462.30 428.86 L461.71 428.97 L460.76 428.65 L459.60 428.05 L458.41 427.39 L457.40 426.91 L456.74 426.86 L456.64 427.51 L456.89 428.61 L457.27 429.91 L457.59 431.18 L457.69 432.17 L457.46 432.72 L456.86 432.77 L455.95 432.37 L454.85 431.67 L453.72 430.91 L452.75 430.34 L452.10 430.23 L451.95 430.87 L452.09 431.98 L452.35 433.32 L452.56 434.61 L452.57 435.60 L452.29 436.13 L451.69 436.13 L450.82 435.65 L449.78 434.85 L448.73 433.99 L447.82 433.33 L447.18 433.17 L446.97 433.79 L447.01 434.92 L447.15 436.27 L447.24 437.57 L447.17 438.56 L446.84 439.07 L446.24 439.01 L445.42 438.45 L444.46 437.57 L443.49 436.61 L442.63 435.88 L442.01 435.66 L441.75 436.26 L441.69 437.38 L441.71 438.74 L441.68 440.05 L441.52 441.03 L441.14 441.50 L440.55 441.39 L439.78 440.76 L438.91 439.79 L438.03 438.76 L437.24 437.95 L436.65 437.67 L436.33 438.25 L436.17 439.36 L436.06 440.72 L435.92 442.01 L435.67 442.98 L435.26 443.41 L434.68 443.25 L433.97 442.55 L433.18 441.51 L432.40 440.40 L431.69 439.53 L431.12 439.20 L430.75 439.74 L430.49 440.84 L430.27 442.18 L430.01 443.46 L429.67 444.39 L429.22 444.79 L428.66 444.58 L428.01 443.82 L427.32 442.71 L426.64 441.53 L426.01 440.60 L425.48 440.22 L425.06 440.73 L424.70 441.80 L424.36 443.11 L423.99 444.37 L423.57 445.27 L423.09 445.62 L422.55 445.36 L421.97 444.55 L421.38 443.38 L420.81 442.15 L420.27 441.16 L419.77 440.74 L419.31 441.20 L418.86 442.24 L418.40 443.52 L417.91 444.73 L417.41 445.59 L416.90 445.90 L416.39 445.59 L415.89 444.73 L415.40 443.52 L414.94 442.24 L414.49 441.20 L414.03 440.74 L413.53 441.16 L412.99 442.15 L412.42 443.38 L411.83 444.55 L411.25 445.36 L410.71 445.62 L410.23 445.27 L409.81 444.37 L409.44 443.11 L409.10 441.80 L408.74 440.73 L408.32 440.22 L407.79 440.60 L407.16 441.53 L406.48 442.71 L405.79 443.82 L405.14 444.58 L404.58 444.79 L404.13 444.39 L403.79 443.46 L403.53 442.18 L403.31 440.84 L403.05 439.74 L402.68 439.20 L402.11 439.53 L401.40 440.40 L400.62 441.51 L399.83 442.55 L399.12 443.25 L398.54 443.41 L398.13 442.98 L397.88 442.01 L397.74 440.72 L397.63 439.36 L397.47 438.25 L397.15 437.67 L396.56 437.95 L395.77 438.76 L394.89 439.79 L394.02 440.76 L393.25 441.39 L392.66 441.50 L392.28 441.03 L392.12 440.05 L392.09 438.74 L392.11 437.38 L392.05 436.26 L391.79 435.66 L391.17 435.88 L390.31 436.61 L389.34 437.57 L388.38 438.45 L387.56 439.01 L386.96 439.07 L386.63 438.56 L386.56 437.57 L386.65 436.27 L386.79 434.92 L386.83 433.79 L386.62 433.17 L385.98 433.33 L385.07 433.99 L384.02 434.85 L382.98 435.65 L382.11 436.13 L381.51 436.13 L381.23 435.60 L381.24 434.61 L381.45 433.32 L381.71 431.98 L381.85 430.87 L381.70 430.23 L381.05 430.34 L380.08 430.91 L378.95 431.67 L377.85 432.37 L376.94 432.77 L376.34 432.72 L376.11 432.17 L376.21 431.18 L376.53 429.91 L376.91 428.61 L377.16 427.51 L377.06 426.86 L376.40 426.91 L375.39 427.39 L374.20 428.05 L373.04 428.65 L372.09 428.97 L371.50 428.86 L371.32 428.29 L371.51 427.31 L371.94 426.08 L372.44 424.82 L372.78 423.74 L372.74 423.09 L372.09 423.08 L371.03 423.46 L369.78 424.02 L368.57 424.51 L367.61 424.74 L367.03 424.58 L366.90 424.00 L367.17 423.04 L367.72 421.86 L368.32 420.64 L368.76 419.60 L368.78 418.94 L368.13 418.87 L367.04 419.16 L365.75 419.60 L364.50 419.98 L363.52 420.13 L362.95 419.92 L362.88 419.33 L363.24 418.40 L363.89 417.27 L364.60 416.11 L365.13 415.11 L365.20 414.46 L364.56 414.33 L363.45 414.52 L362.13 414.85 L360.85 415.11 L359.86 415.17 L359.31 414.91 L359.29 414.31 L359.73 413.42 L360.48 412.35 L361.30 411.26 L361.91 410.32 L362.05 409.67 L361.42 409.49 L360.29 409.58 L358.95 409.78 L357.65 409.94 L356.66 409.90 L356.14 409.60 L356.17 409.00 L356.69 408.15 L357.53 407.15 L358.44 406.14 L359.14 405.25 L359.33 404.63 L358.72 404.38 L357.59 404.38 L356.23 404.46 L354.93 404.49 L353.94 404.37 L353.45 404.02 L353.54 403.42 L354.13 402.63 L355.06 401.71 L356.05 400.78 L356.83 399.96 L357.07 399.35 L356.49 399.06 L355.37 398.95 L354.01 398.91 L352.70 398.83 L351.73 398.61 L351.28 398.22 L351.41 397.64 L352.08 396.90 L353.08 396.06 L354.16 395.23 L355.00 394.48 L355.30 393.90 L354.74 393.55 L353.64 393.34 L352.29 393.18 L351.00 392.98 L350.05 392.69 L349.63 392.25 L349.82 391.68 L350.55 391.00 L351.62 390.27 L352.77 389.53 L353.67 388.86 L354.03 388.31 L353.50 387.92 L352.42 387.61 L351.09 387.32 L349.82 387.01 L348.90 386.63 L348.52 386.16 L348.76 385.61 L349.55 385.00 L350.69 384.36 L351.89 383.73 L352.86 383.15 L353.26 382.63 L352.77 382.19 L351.72 381.78 L350.42 381.38 L349.18 380.96 L348.30 380.50 L347.97 380.00 L348.26 379.47 L349.09 378.93 L350.28 378.40 L351.54 377.88 L352.55 377.38 L353.00 376.90 L352.55 376.42 L351.54 375.92 L350.28 375.40 L349.09 374.87 L348.26 374.33 L347.97 373.80 L348.30 373.30 L349.18 372.84 L350.42 372.42 L351.72 372.02 L352.77 371.61 L353.26 371.17 L352.86 370.65 L351.89 370.07 L350.69 369.44 L349.55 368.80 L348.76 368.19 L348.52 367.64 L348.90 367.17 L349.82 366.79 L351.09 366.48 L352.42 366.19 L353.50 365.88 L354.03 365.49 L353.67 364.94 L352.77 364.27 L351.62 363.53 L350.55 362.80 L349.82 362.12 L349.63 361.55 L350.05 361.11 L351.00 360.82 L352.29 360.62 L353.64 360.46 L354.74 360.25 L355.30 359.90 L355.00 359.32 L354.16 358.57 L353.08 357.74 L352.08 356.90 L351.41 356.16 L351.28 355.58 L351.73 355.19 L352.70 354.97 L354.01 354.89 L355.37 354.85 L356.49 354.74 L357.07 354.45 L356.83 353.84 L356.05 353.02 L355.06 352.09 L354.13 351.17 L353.54 350.38 L353.45 349.78 L353.94 349.43 L354.93 349.31 L356.23 349.34 L357.59 349.42 L358.72 349.42 L359.33 349.17 L359.14 348.55 L358.44 347.66 L357.53 346.65 L356.69 345.65 L356.17 344.80 L356.14 344.20 L356.66 343.90 L357.65 343.86 L358.95 344.02 L360.29 344.22 L361.42 344.31 L362.05 344.13 L361.91 343.48 L361.30 342.54 L360.48 341.45 L359.73 340.38 L359.29 339.49 L359.31 338.89 L359.86 338.63 L360.85 338.69 L362.13 338.95 L363.45 339.28 L364.56 339.47 L365.20 339.34 L365.13 338.69 L364.60 337.69 L363.89 336.53 L363.24 335.40 L362.88 334.47 L362.95 333.88 L363.52 333.67 L364.50 333.82 L365.75 334.20 L367.04 334.64 L368.13 334.93 L368.78 334.86 L368.76 334.20 L368.32 333.16 L367.72 331.94 L367.17 330.76 L366.90 329.80 L367.03 329.22 L367.61 329.06 L368.57 329.29 L369.78 329.78 L371.03 330.34 L372.09 330.72 L372.74 330.71 L372.78 330.06 L372.44 328.98 L371.94 327.72 L371.51 326.49 L371.32 325.51 L371.50 324.94 L372.09 324.83 L373.04 325.15 L374.20 325.75 L375.39 326.41 L376.40 326.89 L377.06 326.94 L377.16 326.29 L376.91 325.19 L376.53 323.89 L376.21 322.62 L376.11 321.63 L376.34 321.08 L376.94 321.03 L377.85 321.43 L378.95 322.13 L380.08 322.89 L381.05 323.46 L381.70 323.57 L381.85 322.93 L381.71 321.82 L381.45 320.48 L381.24 319.19 L381.23 318.20 L381.51 317.67 L382.11 317.67 L382.98 318.15 L384.02 318.95 L385.07 319.81 L385.98 320.47 L386.62 320.63 L386.83 320.01 L386.79 318.88 L386.65 317.53 L386.56 316.23 L386.63 315.24 L386.96 314.73 L387.56 314.79 L388.38 315.35 L389.34 316.23 L390.31 317.19 L391.17 317.92 L391.79 318.14 L392.05 317.54 L392.11 316.42 L392.09 315.06 L392.12 313.75 L392.28 312.77 L392.66 312.30 L393.25 312.41 L394.02 313.04 L394.89 314.01 L395.77 315.04 L396.56 315.85 L397.15 316.13 L397.47 315.55 L397.63 314.44 L397.74 313.08 L397.88 311.79 L398.13 310.82 L398.54 310.39 L399.12 310.55 L399.83 311.25 L400.62 312.29 L401.40 313.40 L402.11 314.27 L402.68 314.60 L403.05 314.06 L403.31 312.96 L403.53 311.62 L403.79 310.34 L404.13 309.41 L404.58 309.01 L405.14 309.22 L405.79 309.98 L406.48 311.09 L407.16 312.27 L407.79 313.20 L408.32 313.58 L408.74 313.07 L409.10 312.00 L409.44 310.69 L409.81 309.43 L410.23 308.53 L410.71 308.18 L411.25 308.44 L411.83 309.25 L412.42 310.42 L412.99 311.65 L413.53 312.64 L414.03 313.06 L414.49 312.60 L414.94 311.56 L415.40 310.28 L415.89 309.07 L416.39 308.21 L416.90 307.90 L417.41 308.21 L417.91 309.07 L418.40 310.28 L418.86 311.56 L419.31 312.60 L419.77 313.06 L420.27 312.64 L420.81 311.65 L421.38 310.42 L421.97 309.25 L422.55 308.44 L423.09 308.18 L423.57 308.53 L423.99 309.43 L424.36 310.69 L424.70 312.00 L425.06 313.07 L425.48 313.58 L426.01 313.20 L426.64 312.27 L427.32 311.09 L428.01 309.98 L428.66 309.22 L429.22 309.01 L429.67 309.41 L430.01 310.34 L430.27 311.62 L430.49 312.96 L430.75 314.06 L431.12 314.60 L431.69 314.27 L432.40 313.40 L433.18 312.29 L433.97 311.25 L434.68 310.55 L435.26 310.39 L435.67 310.82 L435.92 311.79 L436.06 313.08 L436.17 314.44 L436.33 315.55 L436.65 316.13 L437.24 315.85 L438.03 315.04 L438.91 314.01 L439.78 313.04 L440.55 312.41 L441.14 312.30 L441.52 312.77 L441.68 313.75 L441.71 315.06 L441.69 316.42 L441.75 317.54 L442.01 318.14 L442.63 317.92 L443.49 317.19 L444.46 316.23 L445.42 315.35 L446.24 314.79 L446.84 314.73 L447.17 315.24 L447.24 316.23 L447.15 317.53 L447.01 318.88 L446.97 320.01 L447.18 320.63 L447.82 320.47 L448.73 319.81 L449.78 318.95 L450.82 318.15 L451.69 317.67 L452.29 317.67 L452.57 318.20 L452.56 319.19 L452.35 320.48 L452.09 321.82 L451.95 322.93 L452.10 323.57 L452.75 323.46 L453.72 322.89 L454.85 322.13 L455.95 321.43 L456.86 321.03 L457.46 321.08 L457.69 321.63 L457.59 322.62 L457.27 323.89 L456.89 325.19 L456.64 326.29 L456.74 326.94 L457.40 326.89 L458.41 326.41 L459.60 325.75 L460.76 325.15 L461.71 324.83 L462.30 324.94 L462.48 325.51 L462.29 326.49 L461.86 327.72 L461.36 328.98 L461.02 330.06 L461.06 330.71 L461.71 330.72 L462.77 330.34 L464.02 329.78 L465.23 329.29 L466.19 329.06 L466.77 329.22 L466.90 329.80 L466.63 330.76 L466.08 331.94 L465.48 333.16 L465.04 334.20 L465.02 334.86 L465.67 334.93 L466.76 334.64 L468.05 334.20 L469.30 333.82 L470.28 333.67 L470.85 333.88 L470.92 334.47 L470.56 335.40 L469.91 336.53 L469.20 337.69 L468.67 338.69 L468.60 339.34 L469.24 339.47 L470.35 339.28 L471.67 338.95 L472.95 338.69 L473.94 338.63 L474.49 338.89 L474.51 339.49 L474.07 340.38 L473.32 341.45 L472.50 342.54 L471.89 343.48 L471.75 344.13 L472.38 344.31 L473.51 344.22 L474.85 344.02 L476.15 343.86 L477.14 343.90 L477.66 344.20 L477.63 344.80 L477.11 345.65 L476.27 346.65 L475.36 347.66 L474.66 348.55 L474.47 349.17 L475.08 349.42 L476.21 349.42 L477.57 349.34 L478.87 349.31 L479.86 349.43 L480.35 349.78 L480.26 350.38 L479.67 351.17 L478.74 352.09 L477.75 353.02 L476.97 353.84 L476.73 354.45 L477.31 354.74 L478.43 354.85 L479.79 354.89 L481.10 354.97 L482.07 355.19 L482.52 355.58 L482.39 356.16 L481.72 356.90 L480.72 357.74 L479.64 358.57 L478.80 359.32 L478.50 359.90 L479.06 360.25 L480.16 360.46 L481.51 360.62 L482.80 360.82 L483.75 361.11 L484.17 361.55 L483.98 362.12 L483.25 362.80 L482.18 363.53 L481.03 364.27 L480.13 364.94 L479.77 365.49 L480.30 365.88 L481.38 366.19 L482.71 366.48 L483.98 366.79 L484.90 367.17 L485.28 367.64 L485.04 368.19 L484.25 368.80 L483.11 369.44 L481.91 370.07 L480.94 370.65 L480.54 371.17 L481.03 371.61 L482.08 372.02 L483.38 372.42 L484.62 372.84 L485.50 373.30 L485.83 373.80 L485.54 374.33 L484.71 374.87 L483.52 375.40 L482.26 375.92 L481.25 376.42Z" fill="none" stroke="#000" stroke-width="1.150" stroke-linejoin="round"/><path d="M408.70 322.36 L408.70 360.60 Q404.10 364.00 400.70 368.60 L362.46 368.60 A54.6 54.6 0 0 1 408.70 322.36Z" fill="none" stroke="#000" stroke-width="1.100"/><path d="M408.70 430.44 L408.70 392.20 Q404.10 388.80 400.70 384.20 L362.46 384.20 A54.6 54.6 0 0 0 408.70 430.44Z" fill="none" stroke="#000" stroke-width="1.100"/><path d="M424.30 322.36 L424.30 360.60 Q428.90 364.00 432.30 368.60 L470.54 368.60 A54.6 54.6 0 0 0 424.30 322.36Z" fill="none" stroke="#000" stroke-width="1.100"/><path d="M424.30 430.44 L424.30 392.20 Q428.90 388.80 432.30 384.20 L470.54 384.20 A54.6 54.6 0 0 1 424.30 430.44Z" fill="none" stroke="#000" stroke-width="1.100"/><circle cx="416.3" cy="376.6" r="3.100" fill="none" stroke="#000" stroke-width="1"/><path d="M389 319.500 H443" stroke="#b8b8b8" stroke-width="1"/><path d="M348 308.500 H486" stroke="#2a2a2a" stroke-width="1" stroke-dasharray="4 4" shape-rendering="crispEdges" fill="none" stroke-dashoffset="2"/><path d="M348 446.500 H486" stroke="#2a2a2a" stroke-width="1" stroke-dasharray="4 4" shape-rendering="crispEdges" fill="none" stroke-dashoffset="2"/><path d="M348.500 308 V446" stroke="#2a2a2a" stroke-width="1" stroke-dasharray="4 4" shape-rendering="crispEdges" fill="none"/><path d="M485.500 308 V446" stroke="#2a2a2a" stroke-width="1" stroke-dasharray="4 4" shape-rendering="crispEdges" fill="none"/><path transform="translate(336 296)" d="M0 0 L7 0 L5 2 L9 6 L11 4 L11 11 L4 11 L6 9 L2 5 L0 7Z" fill="#000"/><path transform="translate(497.5 296) scale(-1 1)" d="M0 0 L7 0 L5 2 L9 6 L11 4 L11 11 L4 11 L6 9 L2 5 L0 7Z" fill="#000"/><path transform="translate(347 447) scale(-1 1)" d="M0 0 L7 0 L5 2 L9 6 L11 4 L11 11 L4 11 L6 9 L2 5 L0 7Z" fill="#000"/><path transform="translate(486.5 447)" d="M0 0 L7 0 L5 2 L9 6 L11 4 L11 11 L4 11 L6 9 L2 5 L0 7Z" fill="#000"/><path transform="translate(416.5 301.4) rotate(0)" d="M0 -6.5 L4.5 -2 H2.5 V2 H4.5 L0 6.5 L-4.5 2 H-2.5 V-2 H-4.5Z" fill="#000"/><path transform="translate(416.5 452.8) rotate(0)" d="M0 -6.5 L4.5 -2 H2.5 V2 H4.5 L0 6.5 L-4.5 2 H-2.5 V-2 H-4.5Z" fill="#000"/><path transform="translate(341.5 377.3) rotate(90)" d="M0 -6.5 L4.5 -2 H2.5 V2 H4.5 L0 6.5 L-4.5 2 H-2.5 V-2 H-4.5Z" fill="#000"/><path transform="translate(492 377.3) rotate(90)" d="M0 -6.5 L4.5 -2 H2.5 V2 H4.5 L0 6.5 L-4.5 2 H-2.5 V-2 H-4.5Z" fill="#000"/></svg>
<div style="left:529px;top:159px;width:1px;height:420px;background:#a89a8a;"></div>
<div style="left:530px;top:159px;width:1px;height:420px;background:#fbfaf9;"></div>
<div style="left:531px;top:160px;width:303px;height:24px;background:#d8d3cc;"></div>
<div style="left:834px;top:159px;width:1px;height:420px;background:#b9ab9c;"></div>
<div style="left:835px;top:159px;width:1px;height:420px;background:#fbfaf9;"></div>
<svg class="ic" style="left:534.0px;top:161.0px;" width="22" height="22" viewBox="0 0 22 22"><path d="M2.500 3 V20.800" stroke="#d40000" stroke-width="1.200"/><rect x="4.5" y="3.5" width="7.0" height="5.0" fill="url(#gblue2)" stroke="#000" stroke-width="1"/><rect x="5.5" y="4.5" width="5.0" height="3.0" fill="none" stroke="#fff" stroke-width="1" opacity=".5"/><rect x="4.5" y="10.5" width="15.0" height="3.0" fill="url(#gblue2)" stroke="#000" stroke-width="1"/><rect x="4.5" y="16.5" width="12.0" height="4.0" fill="url(#gblue2)" stroke="#000" stroke-width="1"/></svg>
<div class="t" style="left:555px;top:165px;">Выровнять и расставить (Shift...</div>
<div style="left:792px;top:167px;width:11px;height:11px;border:1px solid #5a554f;border-radius:2px;"></div>
<svg class="ic" style="left:792px;top:167px" width="11" height="11"><path d="M3.5 2.8 L8 5.5 L3.5 8.2z" fill="#4a4640"/></svg>
<div style="left:815px;top:167px;width:11px;height:11px;border:1px solid #5a554f;border-radius:2px;"></div>
<svg class="ic" style="left:815px;top:167px" width="11" height="11"><path d="M3 3 L8 8 M8 3 L3 8" stroke="#4a4640" stroke-width="2"/></svg>
<div style="left:531px;top:185px;width:302px;height:395px;border:1px solid #b5a797;border-bottom:none;background:#efebe7;box-shadow:inset 1px 1px 0 #fbfaf8;"></div>
<div class="frame" style="left:537px;top:200px;width:290px;height:132px;"></div>
<div class="flabel" style="left:540px;top:191px;">Выровнять</div>
<div class="frame" style="left:537px;top:348px;width:290px;height:115px;"></div>
<div class="flabel" style="left:540px;top:339px;">Расставить</div>
<div class="frame" style="left:537px;top:479px;width:290px;height:43px;"></div>
<div class="flabel" style="left:540px;top:470px;">Убрать перекрытия</div>
<div class="frame" style="left:537px;top:538px;width:290px;height:50px;"></div>
<div class="flabel" style="left:540px;top:529px;">Внешний вид блок-схем</div>
<div class="t" style="left:538px;top:215px;">Ориентир:</div>
<div style="left:616px;top:208px;width:209px;height:29px;border:1px solid #9a8e80;border-radius:4px;background:linear-gradient(#fbfaf9,#f1eeea 50%,#e8e4de 50%,#e3ded7);"></div>
<div style="left:802px;top:212px;width:1px;height:21px;background:#c9bfb3;box-shadow:1px 0 0 #fbf9f7;"></div>
<div class="t" style="left:622px;top:215px;">Последний выделенный</div>
<svg class="ic" style="left:805.5px;top:214.5px;" width="16" height="16" viewBox="0 0 16 16"><path d="M3 5.500 L8 10.500 L13 5.500" fill="none" stroke="#2e2a26" stroke-width="1.600"/></svg>
<div class="t" style="left:552px;top:241px;">Считать выделение группой:</div>
<div style="left:779px;top:243px;width:13px;height:13px;border:1px solid #8a7f72;border-radius:2px;background:#fff;box-shadow:inset 0 1px 1px rgba(0,0,0,.15);"></div>
<svg class="ic" style="left:544.0px;top:266.0px;" width="24" height="24" viewBox="0 0 24 24"><rect x="0.5" y="5.5" width="17.0" height="7.0" fill="url(#gblue2)" stroke="#000" stroke-width="1"/><rect x="1.5" y="6.5" width="15.0" height="5.0" fill="none" stroke="#fff" stroke-width="1" opacity=".5"/><rect x="10.5" y="9.5" width="7.0" height="6.0" fill="url(#gblue2)" stroke="#000" stroke-width="1"/><rect x="11.5" y="10.5" width="5.0" height="4.0" fill="none" stroke="#fff" stroke-width="1" opacity=".5"/><rect x="5.5" y="17.5" width="12.0" height="5.0" fill="url(#gblue2)" stroke="#000" stroke-width="1"/><rect x="6.5" y="18.5" width="10.0" height="3.0" fill="none" stroke="#fff" stroke-width="1" opacity=".5"/><rect x="18.5" y="-0.5" width="5.0" height="6.0" fill="url(#gyel)" stroke="#1a1a1a" stroke-width="1"/><path d="M18 -0.5 L18 23.4" stroke="#d40000" stroke-width="1.3"/></svg>
<svg class="ic" style="left:580.0px;top:266.0px;" width="24" height="24" viewBox="0 0 24 24"><rect x="0.5" y="1.5" width="22.0" height="7.0" fill="url(#gblue2)" stroke="#000" stroke-width="1"/><rect x="1.5" y="2.5" width="20.0" height="5.0" fill="none" stroke="#fff" stroke-width="1" opacity=".5"/><rect x="0.5" y="4.5" width="7.0" height="6.0" fill="url(#gblue2)" stroke="#000" stroke-width="1"/><rect x="1.5" y="5.5" width="5.0" height="4.0" fill="none" stroke="#fff" stroke-width="1" opacity=".5"/><rect x="0.5" y="12.5" width="12.0" height="5.0" fill="url(#gblue2)" stroke="#000" stroke-width="1"/><rect x="1.5" y="13.5" width="10.0" height="3.0" fill="none" stroke="#fff" stroke-width="1" opacity=".5"/><path d="M0.6 -0.2 L0.6 23.4" stroke="#d40000" stroke-width="1.3"/><path d="M14.8 21.5 L5.4 21.5" stroke="#000" stroke-width="1.1"/><path d="M2 21.5 L5.4 19.2 L5.4 23.8Z" fill="#000"/></svg>
<svg class="ic" style="left:616.0px;top:266.0px;" width="24" height="24" viewBox="0 0 24 24"><rect x="0.5" y="1.5" width="23.0" height="7.0" fill="url(#gblue2)" stroke="#000" stroke-width="1"/><rect x="1.5" y="2.5" width="21.0" height="5.0" fill="none" stroke="#fff" stroke-width="1" opacity=".5"/><rect x="8.5" y="5.5" width="7.0" height="5.0" fill="url(#gblue2)" stroke="#000" stroke-width="1"/><rect x="9.5" y="6.5" width="5.0" height="3.0" fill="none" stroke="#fff" stroke-width="1" opacity=".5"/><rect x="5.5" y="12.5" width="13.0" height="5.0" fill="url(#gblue2)" stroke="#000" stroke-width="1"/><rect x="6.5" y="13.5" width="11.0" height="3.0" fill="none" stroke="#fff" stroke-width="1" opacity=".5"/><path d="M11.6 -0.2 L11.6 23.4" stroke="#d40000" stroke-width="1.3"/><path d="M2 21.5 L7.1 21.5" stroke="#000" stroke-width="1.1"/><path d="M10.5 21.5 L7.1 23.8 L7.1 19.2Z" fill="#000"/><path d="M21 21.5 L16.1 21.5" stroke="#000" stroke-width="1.1"/><path d="M12.7 21.5 L16.1 19.2 L16.1 23.8Z" fill="#000"/></svg>
<svg class="ic" style="left:652.0px;top:266.0px;" width="24" height="24" viewBox="0 0 24 24"><rect x="1.5" y="1.5" width="22.0" height="7.0" fill="url(#gblue2)" stroke="#000" stroke-width="1"/><rect x="2.5" y="2.5" width="20.0" height="5.0" fill="none" stroke="#fff" stroke-width="1" opacity=".5"/><rect x="16.5" y="4.5" width="7.0" height="6.0" fill="url(#gblue2)" stroke="#000" stroke-width="1"/><rect x="17.5" y="5.5" width="5.0" height="4.0" fill="none" stroke="#fff" stroke-width="1" opacity=".5"/><rect x="11.5" y="12.5" width="12.0" height="5.0" fill="url(#gblue2)" stroke="#000" stroke-width="1"/><rect x="12.5" y="13.5" width="10.0" height="3.0" fill="none" stroke="#fff" stroke-width="1" opacity=".5"/><path d="M23.8 -0.2 L23.8 23.4" stroke="#d40000" stroke-width="1.3"/><path d="M9 21.5 L19.1 21.5" stroke="#000" stroke-width="1.1"/><path d="M22.5 21.5 L19.1 23.8 L19.1 19.2Z" fill="#000"/></svg>
<svg class="ic" style="left:688.0px;top:266.0px;" width="24" height="24" viewBox="0 0 24 24"><rect x="6.5" y="5.5" width="17.0" height="7.0" fill="url(#gblue2)" stroke="#000" stroke-width="1"/><rect x="7.5" y="6.5" width="15.0" height="5.0" fill="none" stroke="#fff" stroke-width="1" opacity=".5"/><rect x="6.5" y="9.5" width="7.0" height="6.0" fill="url(#gblue2)" stroke="#000" stroke-width="1"/><rect x="7.5" y="10.5" width="5.0" height="4.0" fill="none" stroke="#fff" stroke-width="1" opacity=".5"/><rect x="6.5" y="17.5" width="12.0" height="5.0" fill="url(#gblue2)" stroke="#000" stroke-width="1"/><rect x="7.5" y="18.5" width="10.0" height="3.0" fill="none" stroke="#fff" stroke-width="1" opacity=".5"/><rect x="0.5" y="-0.5" width="6.0" height="6.0" fill="url(#gyel)" stroke="#1a1a1a" stroke-width="1"/><path d="M6.8 -0.5 L6.8 23.4" stroke="#d40000" stroke-width="1.3"/></svg>
<svg class="ic" style="left:724.0px;top:266.0px;" width="24" height="24" viewBox="0 0 24 24"><path d="M6.8 -0.2 L6.8 22" stroke="#d40000" stroke-width="1.3"/><text x="8" y="7.3" font-family="DejaVu Sans,Liberation Sans,sans-serif" font-weight="bold" font-size="11" fill="#1f2f4f">a</text><text x="2.5" y="19" font-family="Liberation Serif,DejaVu Serif,serif" font-style="italic" font-weight="bold" font-size="24" fill="#000">y</text></svg>
<svg class="ic" style="left:544.0px;top:301.0px;" width="24" height="24" viewBox="0 0 24 24"><rect x="1.5" y="6.5" width="5.0" height="12.0" fill="url(#gblue2)" stroke="#000" stroke-width="1"/><rect x="2.5" y="7.5" width="3.0" height="10.0" fill="none" stroke="#fff" stroke-width="1" opacity=".5"/><rect x="12.5" y="1.5" width="6.0" height="17.0" fill="url(#gblue2)" stroke="#000" stroke-width="1"/><rect x="13.5" y="2.5" width="4.0" height="15.0" fill="none" stroke="#fff" stroke-width="1" opacity=".5"/><rect x="8.5" y="11.5" width="6.0" height="7.0" fill="url(#gblue2)" stroke="#000" stroke-width="1"/><rect x="9.5" y="12.5" width="4.0" height="5.0" fill="none" stroke="#fff" stroke-width="1" opacity=".5"/><rect x="18.5" y="18.5" width="5.0" height="6.0" fill="url(#gyel)" stroke="#1a1a1a" stroke-width="1"/><path d="M0 18.6 L23.8 18.6" stroke="#d40000" stroke-width="1.3"/></svg>
<svg class="ic" style="left:580.0px;top:301.0px;" width="24" height="24" viewBox="0 0 24 24"><rect x="6.5" y="1.5" width="5.0" height="12.0" fill="url(#gblue2)" stroke="#000" stroke-width="1"/><rect x="7.5" y="2.5" width="3.0" height="10.0" fill="none" stroke="#fff" stroke-width="1" opacity=".5"/><rect x="15.5" y="1.5" width="7.0" height="22.0" fill="url(#gblue2)" stroke="#000" stroke-width="1"/><rect x="16.5" y="2.5" width="5.0" height="20.0" fill="none" stroke="#fff" stroke-width="1" opacity=".5"/><rect x="14.5" y="1.5" width="5.0" height="7.0" fill="url(#gblue2)" stroke="#000" stroke-width="1"/><rect x="15.5" y="2.5" width="3.0" height="5.0" fill="none" stroke="#fff" stroke-width="1" opacity=".5"/><path d="M0 1.3 L23.9 1.3" stroke="#d40000" stroke-width="1.3"/><path d="M2.5 15.3 L2.5 6.0" stroke="#000" stroke-width="1.1"/><path d="M2.5 2.6 L4.8 6.0 L0.2 6.0Z" fill="#000"/></svg>
<svg class="ic" style="left:616.0px;top:301.0px;" width="24" height="24" viewBox="0 0 24 24"><rect x="6.5" y="6.5" width="5.0" height="12.0" fill="url(#gblue2)" stroke="#000" stroke-width="1"/><rect x="7.5" y="7.5" width="3.0" height="10.0" fill="none" stroke="#fff" stroke-width="1" opacity=".5"/><rect x="15.5" y="1.5" width="8.0" height="22.0" fill="url(#gblue2)" stroke="#000" stroke-width="1"/><rect x="16.5" y="2.5" width="6.0" height="20.0" fill="none" stroke="#fff" stroke-width="1" opacity=".5"/><rect x="13.5" y="8.5" width="5.0" height="8.0" fill="url(#gblue2)" stroke="#000" stroke-width="1"/><rect x="14.5" y="9.5" width="3.0" height="6.0" fill="none" stroke="#fff" stroke-width="1" opacity=".5"/><path d="M0 12.3 L23.7 12.3" stroke="#d40000" stroke-width="1.3"/><path d="M2.5 3 L2.5 7.6" stroke="#000" stroke-width="1.1"/><path d="M2.5 11 L0.2 7.6 L4.8 7.6Z" fill="#000"/><path d="M2.5 21.7 L2.5 17.1" stroke="#000" stroke-width="1.1"/><path d="M2.5 13.6 L4.8 17.1 L0.2 17.1Z" fill="#000"/></svg>
<svg class="ic" style="left:652.0px;top:301.0px;" width="24" height="24" viewBox="0 0 24 24"><rect x="7.5" y="11.5" width="5.0" height="12.0" fill="url(#gblue2)" stroke="#000" stroke-width="1"/><rect x="8.5" y="12.5" width="3.0" height="10.0" fill="none" stroke="#fff" stroke-width="1" opacity=".5"/><rect x="17.5" y="1.5" width="6.0" height="22.0" fill="url(#gblue2)" stroke="#000" stroke-width="1"/><rect x="18.5" y="2.5" width="4.0" height="20.0" fill="none" stroke="#fff" stroke-width="1" opacity=".5"/><rect x="14.5" y="16.5" width="6.0" height="7.0" fill="url(#gblue2)" stroke="#000" stroke-width="1"/><rect x="15.5" y="17.5" width="4.0" height="5.0" fill="none" stroke="#fff" stroke-width="1" opacity=".5"/><path d="M0 23.6 L24 23.6" stroke="#d40000" stroke-width="1.3"/><path d="M2.5 9 L2.5 19.1" stroke="#000" stroke-width="1.1"/><path d="M2.5 22.5 L0.2 19.1 L4.8 19.1Z" fill="#000"/></svg>
<svg class="ic" style="left:688.0px;top:301.0px;" width="24" height="24" viewBox="0 0 24 24"><rect x="1.5" y="7.5" width="5.0" height="12.0" fill="url(#gblue2)" stroke="#000" stroke-width="1"/><rect x="2.5" y="8.5" width="3.0" height="10.0" fill="none" stroke="#fff" stroke-width="1" opacity=".5"/><rect x="11.5" y="7.5" width="7.0" height="17.0" fill="url(#gblue2)" stroke="#000" stroke-width="1"/><rect x="12.5" y="8.5" width="5.0" height="15.0" fill="none" stroke="#fff" stroke-width="1" opacity=".5"/><rect x="8.5" y="7.5" width="6.0" height="7.0" fill="url(#gblue2)" stroke="#000" stroke-width="1"/><rect x="9.5" y="8.5" width="4.0" height="5.0" fill="none" stroke="#fff" stroke-width="1" opacity=".5"/><rect x="18.5" y="1.5" width="5.0" height="6.0" fill="url(#gyel)" stroke="#1a1a1a" stroke-width="1"/><path d="M0 7.6 L23.9 7.6" stroke="#d40000" stroke-width="1.3"/></svg>
<svg class="ic" style="left:724.0px;top:301.0px;" width="24" height="24" viewBox="0 0 24 24"><text x="0.5" y="16" font-family="Liberation Serif,DejaVu Serif,serif" font-style="italic" font-weight="bold" font-size="24" fill="#000">y</text><text x="13.7" y="15" font-family="DejaVu Sans,Liberation Sans,sans-serif" font-weight="bold" font-size="13.5" fill="#1f2f4f">a</text><path d="M0 15.5 L23.7 15.5" stroke="#d40000" stroke-width="1.3"/></svg>
<svg class="ic" style="left:580.0px;top:361.0px;" width="24" height="24" viewBox="0 0 24 24"><rect x="0.5" y="6.5" width="6.0" height="18.0" fill="url(#gblue2)" stroke="#000" stroke-width="1"/><rect x="1.5" y="7.5" width="4.0" height="16.0" fill="none" stroke="#fff" stroke-width="1" opacity=".5"/><rect x="9.5" y="8.5" width="3.0" height="9.0" fill="url(#gblue2)" stroke="#000" stroke-width="1"/><rect x="18.5" y="7.5" width="5.0" height="8.0" fill="url(#gblue2)" stroke="#000" stroke-width="1"/><rect x="19.5" y="8.5" width="3.0" height="6.0" fill="none" stroke="#fff" stroke-width="1" opacity=".5"/><path d="M0.6 0 L0.6 6.5" stroke="#d40000" stroke-width="1.2"/><path d="M9.7 0 L9.7 8" stroke="#d40000" stroke-width="1.2"/><path d="M18.7 0 L18.7 7.2" stroke="#d40000" stroke-width="1.2"/><path d="M1 1.5 H9.3" stroke="#000" stroke-width="1"/><path d="M1.3 1.5 l2 -1.500 v3z M9.0 1.5 l-2 -1.500 v3z" fill="#000"/><path d="M10.1 1.5 H18.3" stroke="#000" stroke-width="1"/><path d="M10.4 1.5 l2 -1.500 v3z M18.0 1.5 l-2 -1.500 v3z" fill="#000"/></svg>
<svg class="ic" style="left:616.0px;top:361.0px;" width="24" height="24" viewBox="0 0 24 24"><rect x="0.5" y="7.5" width="6.0" height="9.0" fill="url(#gblue2)" stroke="#000" stroke-width="1"/><rect x="1.5" y="8.5" width="4.0" height="7.0" fill="none" stroke="#fff" stroke-width="1" opacity=".5"/><rect x="9.5" y="6.5" width="6.0" height="17.0" fill="url(#gblue2)" stroke="#000" stroke-width="1"/><rect x="10.5" y="7.5" width="4.0" height="15.0" fill="none" stroke="#fff" stroke-width="1" opacity=".5"/><rect x="19.5" y="9.5" width="4.0" height="12.0" fill="url(#gblue2)" stroke="#000" stroke-width="1"/><path d="M3.5 0 L3.5 12.3" stroke="#d40000" stroke-width="1.2"/><path d="M12.5 0 L12.5 12.3" stroke="#d40000" stroke-width="1.2"/><path d="M21.5 0 L21.5 12.3" stroke="#d40000" stroke-width="1.2"/><path d="M4 1.5 H12" stroke="#000" stroke-width="1"/><path d="M4.3 1.5 l2 -1.500 v3z M11.7 1.5 l-2 -1.500 v3z" fill="#000"/><path d="M13 1.5 H21" stroke="#000" stroke-width="1"/><path d="M13.3 1.5 l2 -1.500 v3z M20.7 1.5 l-2 -1.500 v3z" fill="#000"/></svg>
<svg class="ic" style="left:652.0px;top:361.0px;" width="24" height="24" viewBox="0 0 24 24"><rect x="0.5" y="6.5" width="6.0" height="18.0" fill="url(#gblue2)" stroke="#000" stroke-width="1"/><rect x="1.5" y="7.5" width="4.0" height="16.0" fill="none" stroke="#fff" stroke-width="1" opacity=".5"/><rect x="11.5" y="8.5" width="4.0" height="9.0" fill="url(#gblue2)" stroke="#000" stroke-width="1"/><rect x="18.5" y="7.5" width="5.0" height="8.0" fill="url(#gblue2)" stroke="#000" stroke-width="1"/><rect x="19.5" y="8.5" width="3.0" height="6.0" fill="none" stroke="#fff" stroke-width="1" opacity=".5"/><path d="M5.5 0 L5.5 6.5" stroke="#d40000" stroke-width="1.2"/><path d="M14.6 0 L14.6 8" stroke="#d40000" stroke-width="1.2"/><path d="M23.5 0 L23.5 7.2" stroke="#d40000" stroke-width="1.2"/><path d="M6 1.5 H14.1" stroke="#000" stroke-width="1"/><path d="M6.3 1.5 l2 -1.500 v3z M13.799999999999999 1.5 l-2 -1.500 v3z" fill="#000"/><path d="M15 1.5 H23" stroke="#000" stroke-width="1"/><path d="M15.3 1.5 l2 -1.500 v3z M22.7 1.5 l-2 -1.500 v3z" fill="#000"/></svg>
<svg class="ic" style="left:688.0px;top:361.0px;" width="24" height="24" viewBox="0 0 24 24"><rect x="0.5" y="6.5" width="4.0" height="16.0" fill="url(#gblue2)" stroke="#000" stroke-width="1"/><rect x="10.5" y="8.5" width="4.0" height="9.0" fill="url(#gblue2)" stroke="#000" stroke-width="1"/><rect x="20.5" y="6.5" width="4.0" height="18.0" fill="url(#gblue2)" stroke="#000" stroke-width="1"/><path d="M3.6 0 L3.6 6.5" stroke="#d40000" stroke-width="1.2"/><path d="M10.6 0 L10.6 8.4" stroke="#d40000" stroke-width="1.2"/><path d="M13.6 0 L13.6 8.4" stroke="#d40000" stroke-width="1.2"/><path d="M20.6 0 L20.6 6.5" stroke="#d40000" stroke-width="1.2"/><path d="M4 1.5 H10.2" stroke="#000" stroke-width="1"/><path d="M4.3 1.5 l2 -1.500 v3z M9.899999999999999 1.5 l-2 -1.500 v3z" fill="#000"/><path d="M14 1.5 H20.2" stroke="#000" stroke-width="1"/><path d="M14.3 1.5 l2 -1.500 v3z M19.9 1.5 l-2 -1.500 v3z" fill="#000"/></svg>
<svg class="ic" style="left:724.0px;top:361.0px;" width="24" height="24" viewBox="0 0 24 24"><path d="M0.6 0 L0.6 23.8" stroke="#d40000" stroke-width="1.2"/><path d="M14.6 0 L14.6 23.8" stroke="#d40000" stroke-width="1.2"/><path d="M7 2.5 L4.1 2.5" stroke="#000" stroke-width="1.2"/><path d="M1.3 2.5 L4.1 0.6 L4.1 4.4Z" fill="#000"/><path d="M8 2.5 L11.1 2.5" stroke="#000" stroke-width="1.2"/><path d="M13.9 2.5 L11.1 4.4 L11.1 0.6Z" fill="#000"/><text x="1.3" y="16.5" font-family="DejaVu Sans,Liberation Sans,sans-serif" font-weight="bold" font-size="12.5" fill="#1f2f4f">a</text><text x="8.5" y="18" font-family="Liberation Serif,DejaVu Serif,serif" font-style="italic" font-weight="bold" font-size="24" fill="#000">y</text></svg>
<svg class="ic" style="left:580.0px;top:396.0px;" width="24" height="24" viewBox="0 0 24 24"><rect x="7.5" y="1.5" width="8.0" height="5.0" fill="url(#gblue2)" stroke="#000" stroke-width="1"/><rect x="8.5" y="2.5" width="6.0" height="3.0" fill="none" stroke="#fff" stroke-width="1" opacity=".5"/><rect x="8.5" y="10.5" width="9.0" height="3.0" fill="url(#gblue2)" stroke="#000" stroke-width="1"/><rect x="6.5" y="19.5" width="18.0" height="5.0" fill="url(#gblue2)" stroke="#000" stroke-width="1"/><rect x="7.5" y="20.5" width="16.0" height="3.0" fill="none" stroke="#fff" stroke-width="1" opacity=".5"/><path d="M0 1.6 L7 1.6" stroke="#d40000" stroke-width="1.2"/><path d="M0 10.6 L8.3 10.6" stroke="#d40000" stroke-width="1.2"/><path d="M0 19.7 L6.2 19.7" stroke="#d40000" stroke-width="1.2"/><path d="M1.5 2 V10.2" stroke="#000" stroke-width="1"/><path d="M1.5 2.3 l-1.500 2 h3z M1.5 9.899999999999999 l-1.500 -2 h3z" fill="#000"/><path d="M1.5 11 V19.3" stroke="#000" stroke-width="1"/><path d="M1.5 11.3 l-1.500 2 h3z M1.5 19.0 l-1.500 -2 h3z" fill="#000"/></svg>
<svg class="ic" style="left:616.0px;top:396.0px;" width="24" height="24" viewBox="0 0 24 24"><rect x="9.5" y="1.5" width="13.0" height="4.0" fill="url(#gblue2)" stroke="#000" stroke-width="1"/><rect x="6.5" y="9.5" width="17.0" height="6.0" fill="url(#gblue2)" stroke="#000" stroke-width="1"/><rect x="7.5" y="10.5" width="15.0" height="4.0" fill="none" stroke="#fff" stroke-width="1" opacity=".5"/><rect x="7.5" y="18.5" width="9.0" height="6.0" fill="url(#gblue2)" stroke="#000" stroke-width="1"/><rect x="8.5" y="19.5" width="7.0" height="4.0" fill="none" stroke="#fff" stroke-width="1" opacity=".5"/><path d="M0 3.6 L12.7 3.6" stroke="#d40000" stroke-width="1.2"/><path d="M0 12.6 L12.7 12.6" stroke="#d40000" stroke-width="1.2"/><path d="M0 21.5 L12.7 21.5" stroke="#d40000" stroke-width="1.2"/><path d="M1.5 4 V12.2" stroke="#000" stroke-width="1"/><path d="M1.5 4.3 l-1.500 2 h3z M1.5 11.899999999999999 l-1.500 -2 h3z" fill="#000"/><path d="M1.5 13 V21.1" stroke="#000" stroke-width="1"/><path d="M1.5 13.3 l-1.500 2 h3z M1.5 20.8 l-1.500 -2 h3z" fill="#000"/></svg>
<svg class="ic" style="left:652.0px;top:396.0px;" width="24" height="24" viewBox="0 0 24 24"><rect x="7.5" y="1.5" width="8.0" height="5.0" fill="url(#gblue2)" stroke="#000" stroke-width="1"/><rect x="8.5" y="2.5" width="6.0" height="3.0" fill="none" stroke="#fff" stroke-width="1" opacity=".5"/><rect x="8.5" y="12.5" width="9.0" height="3.0" fill="url(#gblue2)" stroke="#000" stroke-width="1"/><rect x="6.5" y="19.5" width="18.0" height="5.0" fill="url(#gblue2)" stroke="#000" stroke-width="1"/><rect x="7.5" y="20.5" width="16.0" height="3.0" fill="none" stroke="#fff" stroke-width="1" opacity=".5"/><path d="M0 6.4 L7 6.4" stroke="#d40000" stroke-width="1.2"/><path d="M0 15.4 L8.3 15.4" stroke="#d40000" stroke-width="1.2"/><path d="M0 24.4 L6.3 24.4" stroke="#d40000" stroke-width="1.2"/><path d="M1.5 6.8 V15" stroke="#000" stroke-width="1"/><path d="M1.5 7.1 l-1.500 2 h3z M1.5 14.7 l-1.500 -2 h3z" fill="#000"/><path d="M1.5 15.8 V24" stroke="#000" stroke-width="1"/><path d="M1.5 16.1 l-1.500 2 h3z M1.5 23.7 l-1.500 -2 h3z" fill="#000"/></svg>
<svg class="ic" style="left:688.0px;top:396.0px;" width="24" height="24" viewBox="0 0 24 24"><rect x="6.5" y="1.5" width="18.0" height="3.0" fill="url(#gblue2)" stroke="#000" stroke-width="1"/><rect x="8.5" y="11.5" width="9.0" height="3.0" fill="url(#gblue2)" stroke="#000" stroke-width="1"/><rect x="6.5" y="21.5" width="16.0" height="3.0" fill="url(#gblue2)" stroke="#000" stroke-width="1"/><path d="M0 4.4 L6.2 4.4" stroke="#d40000" stroke-width="1.2"/><path d="M0 11.5 L8 11.5" stroke="#d40000" stroke-width="1.2"/><path d="M0 14.4 L8 14.4" stroke="#d40000" stroke-width="1.2"/><path d="M0 21.6 L6.2 21.6" stroke="#d40000" stroke-width="1.2"/><path d="M1.5 4.8 V11.1" stroke="#000" stroke-width="1"/><path d="M1.5 5.1 l-1.500 2 h3z M1.5 10.799999999999999 l-1.500 -2 h3z" fill="#000"/><path d="M1.5 14.8 V21.2" stroke="#000" stroke-width="1"/><path d="M1.5 15.100000000000001 l-1.500 2 h3z M1.5 20.9 l-1.500 -2 h3z" fill="#000"/></svg>
<svg class="ic" style="left:724.0px;top:396.0px;" width="24" height="24" viewBox="0 0 24 24"><text x="6.5" y="12" font-family="Liberation Serif,DejaVu Serif,serif" font-style="italic" font-weight="bold" font-size="24" fill="#000">y</text><text x="12.3" y="23.5" font-family="DejaVu Sans,Liberation Sans,sans-serif" font-weight="bold" font-size="13.5" fill="#1f2f4f">a</text><path d="M0 10.5 L23.9 10.5" stroke="#d40000" stroke-width="1.2"/><path d="M0 24.4 L23.9 24.4" stroke="#d40000" stroke-width="1.2"/><path d="M2.5 17 L2.5 14.2" stroke="#000" stroke-width="1.2"/><path d="M2.5 11.3 L4.4 14.2 L0.6 14.2Z" fill="#000"/><path d="M2.5 18 L2.5 20.9" stroke="#000" stroke-width="1.2"/><path d="M2.5 23.7 L0.6 20.9 L4.4 20.9Z" fill="#000"/></svg>
<svg class="ic" style="left:616.0px;top:431.0px;" width="24" height="24" viewBox="0 0 24 24"><rect x="0.5" y="4.5" width="6.0" height="5.0" fill="url(#gyel)" stroke="#1a1a1a" stroke-width="1"/><rect x="12.5" y="2.5" width="6.0" height="5.0" fill="url(#gyel)" stroke="#1a1a1a" stroke-width="1"/><rect x="17.5" y="9.5" width="6.0" height="5.0" fill="url(#gyel)" stroke="#1a1a1a" stroke-width="1"/><rect x="9.5" y="12.5" width="6.0" height="5.0" fill="url(#gyel)" stroke="#1a1a1a" stroke-width="1"/><rect x="0.5" y="20.5" width="6.0" height="5.0" fill="url(#gyel)" stroke="#1a1a1a" stroke-width="1"/><rect x="10.5" y="19.5" width="6.0" height="5.0" fill="url(#gyel)" stroke="#1a1a1a" stroke-width="1"/></svg>
<svg class="ic" style="left:688.0px;top:431.0px;" width="24" height="24" viewBox="0 0 24 24"><path d="M9.400 10.500 L17.500 7.500 M9.400 15.500 L17.500 21.500 M20.500 11.600 V20" stroke="#d40000" stroke-width="1.200"/><rect x="0.5" y="9.5" width="9.0" height="7.0" fill="url(#gyel)" stroke="#1a1a1a" stroke-width="1"/><rect x="17.5" y="4.5" width="6.0" height="7.0" fill="url(#gyel)" stroke="#1a1a1a" stroke-width="1"/><rect x="17.5" y="20.5" width="6.0" height="5.0" fill="url(#gyel)" stroke="#1a1a1a" stroke-width="1"/></svg>
<div class="t" style="left:538px;top:496px;">Г:</div>
<div class="t" style="left:616px;top:496px;">В:</div>
<div class="spin" style="left:554px;top:490px;width:58px;height:26px;"></div>
<div class="spinb" style="left:599px;top:491px;width:12px;height:24px;"></div>
<svg class="ic" style="left:599.5px;top:491px" width="12" height="24" viewBox="0 0 12 24"><path d="M3.500 8.5 l2.500 -2.500 l2.500 2.500 M3.500 14.5 l2.500 2.500 l2.500 -2.500" fill="none" stroke="#5a544e" stroke-width="1.1"/></svg>
<div class="s" style="left:559px;top:496.5px;font-size:13.33px;">0,0</div>
<div class="spin" style="left:633px;top:490px;width:58px;height:26px;"></div>
<div class="spinb" style="left:678px;top:491px;width:12px;height:24px;"></div>
<svg class="ic" style="left:678.5px;top:491px" width="12" height="24" viewBox="0 0 12 24"><path d="M3.500 8.5 l2.500 -2.500 l2.500 2.500 M3.500 14.5 l2.500 2.500 l2.500 -2.500" fill="none" stroke="#5a544e" stroke-width="1.1"/></svg>
<div class="s" style="left:638px;top:496.5px;font-size:13.33px;">0,0</div>
<svg class="ic" style="left:700.0px;top:491.0px;" width="24" height="24" viewBox="0 0 24 24"><rect x="1.5" y="1.5" width="7.0" height="8.0" fill="url(#gblue2)" stroke="#000" stroke-width="1"/><rect x="2.5" y="2.5" width="5.0" height="6.0" fill="none" stroke="#fff" stroke-width="1" opacity=".5"/><rect x="1.5" y="11.5" width="7.0" height="13.0" fill="url(#gblue2)" stroke="#000" stroke-width="1"/><rect x="2.5" y="12.5" width="5.0" height="11.0" fill="none" stroke="#fff" stroke-width="1" opacity=".5"/><rect x="10.5" y="1.5" width="7.0" height="23.0" fill="url(#gblue2)" stroke="#000" stroke-width="1"/><rect x="11.5" y="2.5" width="5.0" height="21.0" fill="none" stroke="#fff" stroke-width="1" opacity=".5"/><rect x="19.5" y="1.5" width="5.0" height="23.0" fill="url(#gblue2)" stroke="#000" stroke-width="1"/><rect x="20.5" y="2.5" width="3.0" height="21.0" fill="none" stroke="#fff" stroke-width="1" opacity=".5"/></svg>
<svg class="ic" style="left:544.0px;top:550.0px;" width="24" height="24" viewBox="0 0 24 24"><path d="M3 6.500 L8 5.500 L11.500 12 L8.500 18.500 L2.500 18 L1.500 12Z M11.500 12 L17 12 M17 12 L22.500 6 M17 12 L22.500 18.500" fill="none" stroke="#4a4a4a" stroke-width=".9"/><rect x="2" y="5.5" width="2" height="2" fill="#c8c8ff" stroke="#6a6ae0" stroke-width=".6"/><rect x="7" y="4.5" width="2" height="2" fill="#c8c8ff" stroke="#6a6ae0" stroke-width=".6"/><rect x="10.5" y="11" width="2" height="2" fill="#c8c8ff" stroke="#6a6ae0" stroke-width=".6"/><rect x="7.5" y="17.5" width="2" height="2" fill="#c8c8ff" stroke="#6a6ae0" stroke-width=".6"/><rect x="1.5" y="17" width="2" height="2" fill="#c8c8ff" stroke="#6a6ae0" stroke-width=".6"/><rect x="0.5" y="11" width="2" height="2" fill="#c8c8ff" stroke="#6a6ae0" stroke-width=".6"/><rect x="16" y="11" width="2" height="2" fill="#c8c8ff" stroke="#6a6ae0" stroke-width=".6"/><rect x="21.5" y="5" width="2" height="2" fill="#c8c8ff" stroke="#6a6ae0" stroke-width=".6"/><rect x="21.5" y="17.5" width="2" height="2" fill="#c8c8ff" stroke="#6a6ae0" stroke-width=".6"/></svg>
<div style="left:838px;top:160px;width:15px;height:418px;border:1px solid #a89c8e;border-radius:3px;background:linear-gradient(90deg,#d9d3cc,#efebe7 40%,#f3f0ed);"></div>
<div style="left:838px;top:160px;width:15px;height:14px;border:1px solid #a89c8e;border-radius:3px 3px 0 0;background:#fbfaf9;"></div>
<svg class="ic" style="left:838px;top:160px" width="15" height="14"><path d="M4 9 l3.5 -3.5 l3.5 3.5" fill="none" stroke="#c9c0b6" stroke-width="1.3"/></svg>
<div style="left:838px;top:564px;width:15px;height:14px;border:1px solid #a89c8e;border-radius:0 0 3px 3px;background:linear-gradient(#f8f6f4,#e4dfd9);"></div>
<svg class="ic" style="left:838px;top:564px" width="15" height="14"><path d="M4 5 l3.5 3.5 l3.5 -3.5" fill="none" stroke="#3a3632" stroke-width="1.3"/></svg>
<div style="left:838px;top:173px;width:15px;height:375px;border:1px solid #a89c8e;border-radius:2px;background:linear-gradient(90deg,#fbfaf9,#ece8e3);"></div>
<div style="left:524px;top:366px;width:4px;height:1px;background:#9e9286;"></div>
<div style="left:524px;top:369px;width:4px;height:1px;background:#9e9286;"></div>
<div style="left:524px;top:372px;width:4px;height:1px;background:#9e9286;"></div>
<div style="left:843px;top:356px;width:5px;height:1px;background:#8a8078;"></div>
<div style="left:843px;top:359px;width:5px;height:1px;background:#8a8078;"></div>
<div style="left:843px;top:362px;width:5px;height:1px;background:#8a8078;"></div>
<div style="left:841px;top:57px;width:0px;height:0px;"></div>
<div style="left:841px;top:60px;width:0px;height:0px;"></div>
<div style="left:841px;top:63px;width:0px;height:0px;"></div>
<div style="left:4px;top:579px;width:838px;height:1px;background:#9a8c7c;"></div>
<div style="left:4px;top:596px;width:838px;height:1px;background:#a89a8a;"></div>
<div style="left:5px;top:580px;width:17px;height:16px;background:#fff;border:1px solid #000;"></div>
<svg class="ic" style="left:5px;top:580px" width="17" height="16"><path d="M1 1 L16 15 M16 1 L1 15" stroke="#8b1a1a" stroke-width="1.6"/></svg>
<div style="left:21.7px;top:580px;width:16.300000000000004px;height:16px;background:#000000;"></div>
<div style="left:37.7px;top:580px;width:16.3px;height:16px;background:#1a1a1a;"></div>
<div style="left:53.7px;top:580px;width:16.3px;height:16px;background:#333333;"></div>
<div style="left:69.7px;top:580px;width:16.3px;height:16px;background:#4d4d4d;"></div>
<div style="left:85.7px;top:580px;width:16.3px;height:16px;background:#666666;"></div>
<div style="left:101.7px;top:580px;width:16.3px;height:16px;background:#808080;"></div>
<div style="left:117.7px;top:580px;width:16.299999999999986px;height:16px;background:#999999;"></div>
<div style="left:133.7px;top:580px;width:16.3px;height:16px;background:#b3b3b3;"></div>
<div style="left:149.7px;top:580px;width:16.3px;height:16px;background:#cccccc;"></div>
<div style="left:165.7px;top:580px;width:16.3px;height:16px;background:#e6e6e6;"></div>
<div style="left:181.7px;top:580px;width:16.3px;height:16px;background:#ececec;"></div>
<div style="left:197.7px;top:580px;width:16.3px;height:16px;background:#f2f2f2;"></div>
<div style="left:213.7px;top:580px;width:16.3px;height:16px;background:#f9f9f9;"></div>
<div style="left:229.7px;top:580px;width:16.3px;height:16px;background:#ffffff;"></div>
<div style="left:245.7px;top:580px;width:16.3px;height:16px;background:#800000;"></div>
<div style="left:261.7px;top:580px;width:16.3px;height:16px;background:#ff0000;"></div>
<div style="left:277.7px;top:580px;width:16.3px;height:16px;background:#808000;"></div>
<div style="left:293.7px;top:580px;width:16.3px;height:16px;background:#ffff00;"></div>
<div style="left:309.7px;top:580px;width:16.3px;height:16px;background:#008000;"></div>
<div style="left:325.7px;top:580px;width:16.3px;height:16px;background:#00ff00;"></div>
<div style="left:341.7px;top:580px;width:16.3px;height:16px;background:#008080;"></div>
<div style="left:357.7px;top:580px;width:16.3px;height:16px;background:#00ffff;"></div>
<div style="left:373.7px;top:580px;width:16.3px;height:16px;background:#000080;"></div>
<div style="left:389.7px;top:580px;width:16.3px;height:16px;background:#0000ff;"></div>
<div style="left:405.7px;top:580px;width:16.3px;height:16px;background:#800080;"></div>
<div style="left:421.7px;top:580px;width:16.3px;height:16px;background:#ff00ff;"></div>
<div style="left:437.7px;top:580px;width:16.3px;height:16px;background:#2b0000;"></div>
<div style="left:453.7px;top:580px;width:16.3px;height:16px;background:#550000;"></div>
<div style="left:469.7px;top:580px;width:16.3px;height:16px;background:#800000;"></div>
<div style="left:485.7px;top:580px;width:16.3px;height:16px;background:#aa0000;"></div>
<div style="left:501.7px;top:580px;width:16.300000000000058px;height:16px;background:#d40000;"></div>
<div style="left:517.7px;top:580px;width:16.3px;height:16px;background:#ff0000;"></div>
<div style="left:533.7px;top:580px;width:16.3px;height:16px;background:#ff2a2a;"></div>
<div style="left:549.7px;top:580px;width:16.3px;height:16px;background:#ff5555;"></div>
<div style="left:565.7px;top:580px;width:16.3px;height:16px;background:#ff8080;"></div>
<div style="left:581.7px;top:580px;width:16.3px;height:16px;background:#ffaaaa;"></div>
<div style="left:597.7px;top:580px;width:16.3px;height:16px;background:#ffd5d5;"></div>
<div style="left:613.7px;top:580px;width:16.3px;height:16px;background:#280b0b;"></div>
<div style="left:629.7px;top:580px;width:16.3px;height:16px;background:#501616;"></div>
<div style="left:645.7px;top:580px;width:16.3px;height:16px;background:#782121;"></div>
<div style="left:661.7px;top:580px;width:16.3px;height:16px;background:#a02c2c;"></div>
<div style="left:677.7px;top:580px;width:16.3px;height:16px;background:#c83737;"></div>
<div style="left:693.7px;top:580px;width:16.3px;height:16px;background:#d35f5f;"></div>
<div style="left:709.7px;top:580px;width:16.3px;height:16px;background:#de8787;"></div>
<div style="left:725.7px;top:580px;width:16.3px;height:16px;background:#e9afaf;"></div>
<div style="left:741.7px;top:580px;width:16.3px;height:16px;background:#f4d7d7;"></div>
<div style="left:757.7px;top:580px;width:16.3px;height:16px;background:#241c1c;"></div>
<div style="left:773.7px;top:580px;width:16.3px;height:16px;background:#483737;"></div>
<div style="left:789.7px;top:580px;width:16.3px;height:16px;background:#6c5353;"></div>
<div style="left:805.7px;top:580px;width:16.3px;height:16px;background:#916f6f;"></div>
<div style="left:821.7px;top:580px;width:16.3px;height:16px;background:#ac9393;"></div>
<div style="left:837.7px;top:580px;width:4.099999999999954px;height:16px;background:#c8b7b7;"></div>
<svg class="ic" style="left:842px;top:577px" width="12" height="16"><path d="M8 3.500 l-4 4.500 l4 4.500" fill="none" stroke="#2e2a26" stroke-width="1.500"/></svg>
<div style="left:5px;top:600px;width:837px;height:15px;border:1px solid #a89c8e;border-radius:3px;background:linear-gradient(#d9d3cc,#ebe7e2 40%,#efebe7);"></div>
<div style="left:5px;top:600px;width:15px;height:15px;border:1px solid #a89c8e;border-radius:3px 0 0 3px;background:#fbfaf9;"></div>
<svg class="ic" style="left:5px;top:600px" width="14" height="14"><path d="M9 3.5 l-3.5 3.5 l3.5 3.5" fill="none" stroke="#c9c0b6" stroke-width="1.3"/></svg>
<div style="left:19px;top:600px;width:98px;height:15px;border:1px solid #a89c8e;border-radius:2px;background:linear-gradient(#fbfaf9,#e9e5df);"></div>
<div style="left:64px;top:605px;width:1px;height:5px;background:#b5a797;"></div>
<div style="left:67px;top:605px;width:1px;height:5px;background:#b5a797;"></div>
<div style="left:70px;top:605px;width:1px;height:5px;background:#b5a797;"></div>
<div style="left:827px;top:600px;width:15px;height:15px;border:1px solid #a89c8e;border-radius:0 3px 3px 0;background:linear-gradient(#f8f6f4,#e4dfd9);"></div>
<svg class="ic" style="left:827px;top:600px" width="15" height="14"><path d="M6 3.5 l3.5 3.5 l-3.5 3.5" fill="none" stroke="#3a3632" stroke-width="1.3"/></svg>
<div class="s" style="left:6.500px;top:616px;font-size:11.100px;">Заливка:</div>
<div class="s" style="left:6.500px;top:629px;font-size:11.100px;">Обводка:</div>
<div class="s" style="left:84px;top:616px;font-style:italic;font-size:11.300px;">Нет</div>
<div style="left:63px;top:629px;width:54px;height:14px;background:#000;"></div>
<div class="s" style="left:120px;top:629px;">1</div>
<div class="s" style="left:131px;top:623px;">Н:</div>
<div class="spin" style="left:146px;top:619px;width:36px;height:21px;"></div>
<div class="spinb" style="left:169px;top:620px;width:12px;height:19px;"></div>
<svg class="ic" style="left:169.5px;top:620px" width="12" height="19" viewBox="0 0 12 19"><path d="M3.500 6.0 l2.500 -2.500 l2.500 2.500 M3.500 12.0 l2.500 2.500 l2.500 -2.500" fill="none" stroke="#5a544e" stroke-width="1.1"/></svg>
<div class="s" style="left:150px;top:623.0px;font-size:11px;">10(</div>
<div class="sep" style="left:185px;top:616px;width:1px;height:26px;"></div>
<svg class="ic" style="left:190.0px;top:621.0px;" width="16" height="16" viewBox="0 0 16 16"><path d="M2 8.500 Q7.500 3.500 13.500 8.500 Q7.500 13.500 2 8.500Z" fill="#fff" stroke="#111" stroke-width="1.100"/><circle cx="7.700" cy="8.500" r="2.300" fill="#111"/><path d="M3 4.500 l1.300 1.600 M5.800 2.800 l.6 2 M9.300 2.800 l-.5 2 M12 4.300 l-1.200 1.700" stroke="#111" stroke-width="1"/></svg>
<svg class="ic" style="left:209.5px;top:622.5px;" width="16" height="16" viewBox="0 0 16 16"><defs><linearGradient id="glk" x1="0" y1="0" x2="1" y2="1"><stop offset="0" stop-color="#ffffff"/><stop offset=".45" stop-color="#fdf6c8"/><stop offset="1" stop-color="#f0cc30"/></linearGradient></defs><path d="M5.600 3.800 Q5.800 1.200 8.600 1.200 Q11.700 1.200 11.800 6.500" fill="none" stroke="#2a2a2a" stroke-width="1.200"/><path d="M4.300 6.300 H11.700 L12.900 12.300 H4 Z" fill="url(#glk)" stroke="#2a2a2a" stroke-width="1"/><path d="M7.300 8.200 h2.400 l-.9 2.800z" fill="#222"/></svg>
<div style="left:229px;top:617px;width:93px;height:25px;border:1px solid #9a8e80;border-radius:4px;background:linear-gradient(#fbfaf9,#f1eeea 50%,#e8e4de 50%,#e3ded7);"></div>
<div style="left:299px;top:621px;width:1px;height:17px;background:#c9bfb3;box-shadow:1px 0 0 #fbf9f7;"></div>
<div class="s" style="left:236px;top:622.700px;font-weight:bold;">•Layer 1</div>
<svg class="ic" style="left:302.5px;top:621.0px;" width="16" height="16" viewBox="0 0 16 16"><path d="M3 5.500 L8 10.500 L13 5.500" fill="none" stroke="#2e2a26" stroke-width="1.600"/></svg>
<div class="t" style="left:328px;top:621.500px;width:369px;overflow:hidden;"><b>Alt</b>: выделять под выделенным; перетаскиванием ...</div>
<div class="sep" style="left:699px;top:616px;width:1px;height:27px;"></div>
<div class="s" style="left:702px;top:616px;">X:</div><div class="s" style="left:702px;top:629.500px;">Y:</div>
<div class="s" style="left:721px;top:616px;font-size:10px;font-family:'DejaVu Sans Mono','Liberation Mono',monospace;">290,92</div>
<div class="s" style="left:721px;top:629.500px;font-size:10px;font-family:'DejaVu Sans Mono','Liberation Mono',monospace;">372,75</div>
<div class="s" style="left:765px;top:622.500px;">Z:</div>
<div class="spin" style="left:779px;top:618px;width:55px;height:21px;"></div>
<div class="spinb" style="left:821px;top:619px;width:12px;height:19px;"></div>
<svg class="ic" style="left:821.5px;top:619px" width="12" height="19" viewBox="0 0 12 19"><path d="M3.500 6.0 l2.500 -2.500 l2.500 2.500 M3.500 12.0 l2.500 2.500 l2.500 -2.500" fill="none" stroke="#5a544e" stroke-width="1.1"/></svg>
<div class="s" style="left:786px;top:622.0px;font-size:11px;"> 99%</div>
<svg class="ic" style="left:840px;top:630px" width="14" height="14"><g fill="#c4b8ab"><rect x="10" y="2" width="2" height="2"/><rect x="6" y="6" width="2" height="2"/><rect x="10" y="6" width="2" height="2"/><rect x="2" y="10" width="2" height="2"/><rect x="6" y="10" width="2" height="2"/><rect x="10" y="10" width="2" height="2"/></g></svg>
<svg class="ic" style="left:333px;top:525px" width="16" height="24"><path d="M1.500 1 V17.500 L5.300 13.800 L7.500 18.500 Q8.300 19.600 9.500 19 Q10.300 18.200 9.800 17 L7.800 12.500 L12.300 12.200Z" fill="#fff" stroke="#000" stroke-width="1.200" stroke-linejoin="round"/></svg>
<div style="left:0px;top:0px;width:859px;height:648px;border:1px solid #2a2522;border-radius:7px 7px 5px 5px;pointer-events:none;border-top-color:transparent;"></div>
</div></body></html>
